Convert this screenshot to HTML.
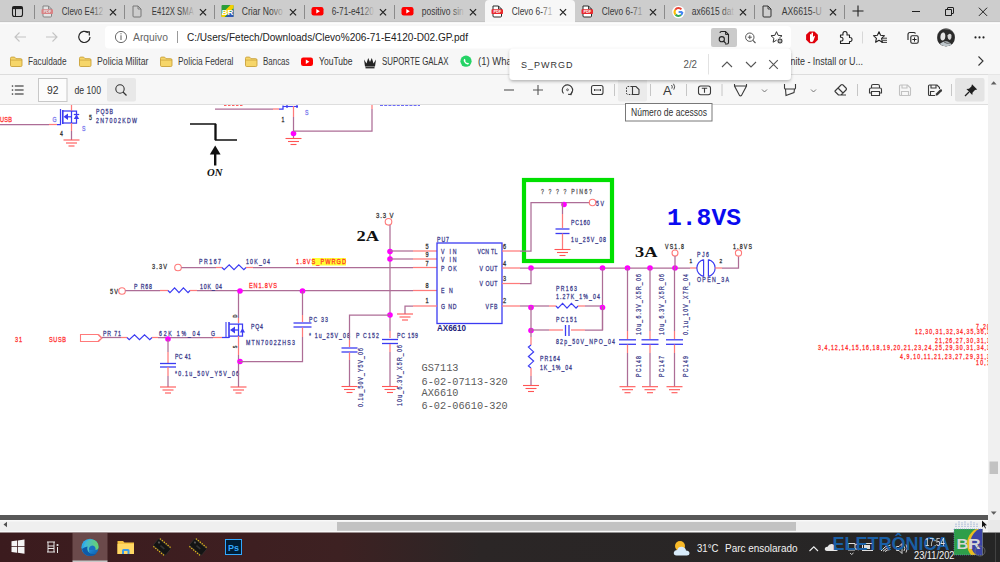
<!DOCTYPE html>
<html><head><meta charset="utf-8"><style>*{margin:0;padding:0}html,body{width:1000px;height:562px;overflow:hidden;background:#fff}svg{display:block}</style></head><body>
<svg width="1000" height="562" viewBox="0 0 1000 562">
<defs>
<linearGradient id="fade" x1="0" x2="1"><stop offset="0" stop-color="#fff"/><stop offset="0.72" stop-color="#fff"/><stop offset="1" stop-color="#fff" stop-opacity="0"/></linearGradient>
<mask id="fm" maskContentUnits="objectBoundingBox"><rect width="1" height="1" fill="url(#fade)"/></mask>
<filter id="sh" x="-10%" y="-30%" width="120%" height="160%"><feDropShadow dx="0" dy="1.5" stdDeviation="1.8" flood-color="#000" flood-opacity="0.28"/></filter>
<linearGradient id="tb" gradientUnits="userSpaceOnUse" x1="0" y1="0" x2="1000" y2="0"><stop offset="0" stop-color="#3b1b1e"/><stop offset="0.25" stop-color="#3e1f21"/><stop offset="0.34" stop-color="#3d2122"/><stop offset="0.48" stop-color="#2b2626"/><stop offset="1" stop-color="#252525"/></linearGradient>
</defs>
<rect x="0" y="0" width="1000" height="22" fill="#cdcdcd" rx="0" />
<path d="M485 22 V4 Q485 0 489 0 H571 Q575 0 575 4 V22 Z" stroke="none" stroke-width="1" fill="#f7f7f7" />
<line x1="34.5" y1="5" x2="34.5" y2="19" stroke="#8a8a8a" stroke-width="1" />
<line x1="124.5" y1="5" x2="124.5" y2="19" stroke="#8a8a8a" stroke-width="1" />
<line x1="214.5" y1="5" x2="214.5" y2="19" stroke="#8a8a8a" stroke-width="1" />
<line x1="304.5" y1="5" x2="304.5" y2="19" stroke="#8a8a8a" stroke-width="1" />
<line x1="394.5" y1="5" x2="394.5" y2="19" stroke="#8a8a8a" stroke-width="1" />
<line x1="664.5" y1="5" x2="664.5" y2="19" stroke="#8a8a8a" stroke-width="1" />
<line x1="754.5" y1="5" x2="754.5" y2="19" stroke="#8a8a8a" stroke-width="1" />
<line x1="844.5" y1="5" x2="844.5" y2="19" stroke="#8a8a8a" stroke-width="1" />
<path d="M12.5 8.5 Q12.5 6.5 14.5 6.5 H20.5 Q22.5 6.5 22.5 8.5 V14.5 Q22.5 16.5 20.5 16.5 H14.5 Q12.5 16.5 12.5 14.5 Z" stroke="#1f1f1f" stroke-width="1.1" fill="none" />
<rect x="12.5" y="6.5" width="10" height="2.6" fill="#1f1f1f" rx="0" />
<line x1="15.5" y1="8.5" x2="15.5" y2="16.5" stroke="#1f1f1f" stroke-width="1" />
<g transform="translate(41.5,5.5)" opacity="0.45">
<path d="M1.5 0.5 H7 L10 3.5 V10.5 Q10 11.5 9 11.5 H2.5 Q1.5 11.5 1.5 10.5 Z" stroke="#2a2a2a" stroke-width="1" fill="#fff" />
<path d="M7 0.5 V3.5 H10" stroke="#2a2a2a" stroke-width="0.9" fill="none" />
<rect x="0" y="3.8" width="11.5" height="4.6" fill="#e8282e" rx="0.6" />
<text x="5.8" y="7.4" font-size="3.9" font-weight="bold" fill="#fff" text-anchor="middle" font-family='"Liberation Sans",sans-serif'>PDF</text>
</g>
<clipPath id="tc0"><rect x="55" y="2" width="52" height="18"/></clipPath>
<g clip-path="url(#tc0)">
<text x="61.8" y="14.8" font-size="10" fill="#3a3a3a" font-family='"Liberation Sans",sans-serif' font-weight="normal" text-anchor="start" textLength="41.5" lengthAdjust="spacingAndGlyphs" >Clevo E412</text>
<rect x="91" y="2" width="14" height="18" fill="url(#fd0)"/>
<linearGradient id="fd0" x1="0" x2="1"><stop offset="0" stop-color="#cdcdcd" stop-opacity="0"/><stop offset="1" stop-color="#cdcdcd"/></linearGradient>
</g>
<path d="M109.9 9.1 L116.1 15.299999999999999 M116.1 9.1 L109.9 15.299999999999999" stroke="#1f1f1f" stroke-width="1.15" fill="none" />
<g transform="translate(131.5,5.5)">
<path d="M1.5 0.5 H6.5 L9.5 3.5 V10.5 Q9.5 11.5 8.5 11.5 H2.5 Q1.5 11.5 1.5 10.5 Z" stroke="#777" stroke-width="1" fill="none" />
<path d="M6.5 0.5 V3.5 H9.5" stroke="#777" stroke-width="0.9" fill="none" />
</g>
<clipPath id="tc1"><rect x="145" y="2" width="52" height="18"/></clipPath>
<g clip-path="url(#tc1)">
<text x="151.8" y="14.8" font-size="10" fill="#3a3a3a" font-family='"Liberation Sans",sans-serif' font-weight="normal" text-anchor="start" textLength="42" lengthAdjust="spacingAndGlyphs" >E412X SMA</text>
<rect x="181" y="2" width="14" height="18" fill="url(#fd1)"/>
<linearGradient id="fd1" x1="0" x2="1"><stop offset="0" stop-color="#cdcdcd" stop-opacity="0"/><stop offset="1" stop-color="#cdcdcd"/></linearGradient>
</g>
<path d="M199.9 9.1 L206.1 15.299999999999999 M206.1 9.1 L199.9 15.299999999999999" stroke="#1f1f1f" stroke-width="1.15" fill="none" />
<g transform="translate(221.5,5)">
<rect x="0" y="0" width="12" height="12" fill="#2a9d3a" rx="1" />
<path d="M0 9 L9 0 H12 V3 L3 12 H0 Z" stroke="none" stroke-width="1" fill="#f5d000" />
<path d="M12 4 V12 H4 Z" stroke="none" stroke-width="1" fill="#2f56b5" />
<text x="6" y="9.5" font-size="8" font-weight="bold" fill="#fff" text-anchor="middle" font-family='"Liberation Sans",sans-serif'>BR</text>
</g>
<clipPath id="tc2"><rect x="235" y="2" width="52" height="18"/></clipPath>
<g clip-path="url(#tc2)">
<text x="241.8" y="14.8" font-size="10" fill="#3a3a3a" font-family='"Liberation Sans",sans-serif' font-weight="normal" text-anchor="start" textLength="41" lengthAdjust="spacingAndGlyphs" >Criar Novo</text>
<rect x="271" y="2" width="14" height="18" fill="url(#fd2)"/>
<linearGradient id="fd2" x1="0" x2="1"><stop offset="0" stop-color="#cdcdcd" stop-opacity="0"/><stop offset="1" stop-color="#cdcdcd"/></linearGradient>
</g>
<path d="M289.9 9.1 L296.1 15.299999999999999 M296.1 9.1 L289.9 15.299999999999999" stroke="#1f1f1f" stroke-width="1.15" fill="none" />
<g transform="translate(311.5,5.5)">
<rect x="0" y="1.5" width="12" height="8.5" fill="#ff0000" rx="2.2" />
<path d="M4.8 3.6 L8.4 5.75 L4.8 7.9 Z" stroke="none" stroke-width="1" fill="#fff" />
</g>
<clipPath id="tc3"><rect x="325" y="2" width="52" height="18"/></clipPath>
<g clip-path="url(#tc3)">
<text x="331.8" y="14.8" font-size="10" fill="#3a3a3a" font-family='"Liberation Sans",sans-serif' font-weight="normal" text-anchor="start" textLength="42" lengthAdjust="spacingAndGlyphs" >6-71-e4120</text>
<rect x="361" y="2" width="14" height="18" fill="url(#fd3)"/>
<linearGradient id="fd3" x1="0" x2="1"><stop offset="0" stop-color="#cdcdcd" stop-opacity="0"/><stop offset="1" stop-color="#cdcdcd"/></linearGradient>
</g>
<path d="M379.9 9.1 L386.1 15.299999999999999 M386.1 9.1 L379.9 15.299999999999999" stroke="#1f1f1f" stroke-width="1.15" fill="none" />
<g transform="translate(401.5,5.5)">
<rect x="0" y="1.5" width="12" height="8.5" fill="#ff0000" rx="2.2" />
<path d="M4.8 3.6 L8.4 5.75 L4.8 7.9 Z" stroke="none" stroke-width="1" fill="#fff" />
</g>
<clipPath id="tc4"><rect x="415" y="2" width="52" height="18"/></clipPath>
<g clip-path="url(#tc4)">
<text x="421.8" y="14.8" font-size="10" fill="#3a3a3a" font-family='"Liberation Sans",sans-serif' font-weight="normal" text-anchor="start" textLength="42" lengthAdjust="spacingAndGlyphs" >positivo sin</text>
<rect x="451" y="2" width="14" height="18" fill="url(#fd4)"/>
<linearGradient id="fd4" x1="0" x2="1"><stop offset="0" stop-color="#cdcdcd" stop-opacity="0"/><stop offset="1" stop-color="#cdcdcd"/></linearGradient>
</g>
<path d="M469.9 9.1 L476.1 15.299999999999999 M476.1 9.1 L469.9 15.299999999999999" stroke="#1f1f1f" stroke-width="1.15" fill="none" />
<g transform="translate(491.5,5.5)">
<path d="M1.5 0.5 H7 L10 3.5 V10.5 Q10 11.5 9 11.5 H2.5 Q1.5 11.5 1.5 10.5 Z" stroke="#2a2a2a" stroke-width="1" fill="#fff" />
<path d="M7 0.5 V3.5 H10" stroke="#2a2a2a" stroke-width="0.9" fill="none" />
<rect x="0" y="3.8" width="11.5" height="4.6" fill="#e8282e" rx="0.6" />
<text x="5.8" y="7.4" font-size="3.9" font-weight="bold" fill="#fff" text-anchor="middle" font-family='"Liberation Sans",sans-serif'>PDF</text>
</g>
<clipPath id="tc5"><rect x="505" y="2" width="52" height="18"/></clipPath>
<g clip-path="url(#tc5)">
<text x="511.8" y="14.8" font-size="10" fill="#3a3a3a" font-family='"Liberation Sans",sans-serif' font-weight="normal" text-anchor="start" textLength="40.5" lengthAdjust="spacingAndGlyphs" >Clevo 6-71</text>
<rect x="541" y="2" width="14" height="18" fill="url(#fd5)"/>
<linearGradient id="fd5" x1="0" x2="1"><stop offset="0" stop-color="#f7f7f7" stop-opacity="0"/><stop offset="1" stop-color="#f7f7f7"/></linearGradient>
</g>
<path d="M559.9 9.1 L566.1 15.299999999999999 M566.1 9.1 L559.9 15.299999999999999" stroke="#1f1f1f" stroke-width="1.15" fill="none" />
<g transform="translate(581.5,5.5)">
<path d="M1.5 0.5 H7 L10 3.5 V10.5 Q10 11.5 9 11.5 H2.5 Q1.5 11.5 1.5 10.5 Z" stroke="#2a2a2a" stroke-width="1" fill="#fff" />
<path d="M7 0.5 V3.5 H10" stroke="#2a2a2a" stroke-width="0.9" fill="none" />
<rect x="0" y="3.8" width="11.5" height="4.6" fill="#e8282e" rx="0.6" />
<text x="5.8" y="7.4" font-size="3.9" font-weight="bold" fill="#fff" text-anchor="middle" font-family='"Liberation Sans",sans-serif'>PDF</text>
</g>
<clipPath id="tc6"><rect x="595" y="2" width="52" height="18"/></clipPath>
<g clip-path="url(#tc6)">
<text x="601.8" y="14.8" font-size="10" fill="#3a3a3a" font-family='"Liberation Sans",sans-serif' font-weight="normal" text-anchor="start" textLength="40.5" lengthAdjust="spacingAndGlyphs" >Clevo 6-71</text>
<rect x="631" y="2" width="14" height="18" fill="url(#fd6)"/>
<linearGradient id="fd6" x1="0" x2="1"><stop offset="0" stop-color="#cdcdcd" stop-opacity="0"/><stop offset="1" stop-color="#cdcdcd"/></linearGradient>
</g>
<path d="M649.9 9.1 L656.1 15.299999999999999 M656.1 9.1 L649.9 15.299999999999999" stroke="#1f1f1f" stroke-width="1.15" fill="none" />
<g transform="translate(673,6.5)">
<circle cx="5.5" cy="5.5" r="6.3" fill="#fff"/>
<path d="M9.40 5.50 A3.9 3.9 0 0 1 8.01 8.49" stroke="#4285f4" stroke-width="2" fill="none" />
<path d="M8.01 8.49 A3.9 3.9 0 0 1 2.51 8.01" stroke="#34a853" stroke-width="2" fill="none" />
<path d="M2.51 8.01 A3.9 3.9 0 0 1 2.31 3.26" stroke="#fbbc05" stroke-width="2" fill="none" />
<path d="M2.31 3.26 A3.9 3.9 0 0 1 8.40 2.89" stroke="#ea4335" stroke-width="2" fill="none" />
<line x1="5.6" y1="5.5" x2="9.4" y2="5.5" stroke="#4285f4" stroke-width="1.9" />
</g>
<clipPath id="tc7"><rect x="685" y="2" width="52" height="18"/></clipPath>
<g clip-path="url(#tc7)">
<text x="691.8" y="14.8" font-size="10" fill="#3a3a3a" font-family='"Liberation Sans",sans-serif' font-weight="normal" text-anchor="start" textLength="42" lengthAdjust="spacingAndGlyphs" >ax6615 dat</text>
<rect x="721" y="2" width="14" height="18" fill="url(#fd7)"/>
<linearGradient id="fd7" x1="0" x2="1"><stop offset="0" stop-color="#cdcdcd" stop-opacity="0"/><stop offset="1" stop-color="#cdcdcd"/></linearGradient>
</g>
<path d="M739.9 9.1 L746.1 15.299999999999999 M746.1 9.1 L739.9 15.299999999999999" stroke="#1f1f1f" stroke-width="1.15" fill="none" />
<g transform="translate(761.5,5.5)">
<path d="M1.5 0.5 H6.5 L9.5 3.5 V10.5 Q9.5 11.5 8.5 11.5 H2.5 Q1.5 11.5 1.5 10.5 Z" stroke="#333" stroke-width="1" fill="none" />
<path d="M6.5 0.5 V3.5 H9.5" stroke="#333" stroke-width="0.9" fill="none" />
</g>
<clipPath id="tc8"><rect x="775" y="2" width="52" height="18"/></clipPath>
<g clip-path="url(#tc8)">
<text x="781.8" y="14.8" font-size="10" fill="#3a3a3a" font-family='"Liberation Sans",sans-serif' font-weight="normal" text-anchor="start" textLength="40" lengthAdjust="spacingAndGlyphs" >AX6615-U</text>
<rect x="811" y="2" width="14" height="18" fill="url(#fd8)"/>
<linearGradient id="fd8" x1="0" x2="1"><stop offset="0" stop-color="#cdcdcd" stop-opacity="0"/><stop offset="1" stop-color="#cdcdcd"/></linearGradient>
</g>
<path d="M829.9 9.1 L836.1 15.299999999999999 M836.1 9.1 L829.9 15.299999999999999" stroke="#1f1f1f" stroke-width="1.15" fill="none" />
<path d="M852.5 11 H863.5 M858 5.5 V16.5" stroke="#1f1f1f" stroke-width="1.1" fill="none" />
<line x1="912" y1="11.5" x2="920" y2="11.5" stroke="#1f1f1f" stroke-width="1" />
<path d="M945.5 9.5 H951.5 V15.5 H945.5 Z M947.5 9.5 V8 Q947.5 7.5 948 7.5 H953 Q953.5 7.5 953.5 8 V13 Q953.5 13.5 953 13.5 H951.5" stroke="#1f1f1f" stroke-width="1" fill="none" />
<path d="M978.9 7.700000000000001 L987.1 15.9 M987.1 7.700000000000001 L978.9 15.9" stroke="#1f1f1f" stroke-width="1" fill="none" />
<rect x="0" y="22" width="1000" height="53" fill="#f7f7f7" rx="0" />
<rect x="0" y="21.3" width="485" height="1" fill="#c0c0c0" rx="0" />
<rect x="575" y="21.3" width="425" height="1" fill="#c0c0c0" rx="0" />
<rect x="0" y="22.3" width="1000" height="1.5" fill="#fdfdfd" rx="0" />
<rect x="105" y="26" width="686" height="22.5" fill="#ffffff" rx="4" />
<path d="M26 37 H15 M19.5 32.5 L15 37 L19.5 41.5" stroke="#c4c4c4" stroke-width="1.1" fill="none" />
<path d="M46 37 H57 M52.5 32.5 L57 37 L52.5 41.5" stroke="#c4c4c4" stroke-width="1.1" fill="none" />
<path d="M90 37 A5.6 5.6 0 1 1 88 32.6" stroke="#262626" stroke-width="1.2" fill="none" />
<path d="M85.5 31.8 H89.3 V35.6" stroke="#262626" stroke-width="1.2" fill="none" />
<circle cx="121" cy="37" r="5.6" fill="none" stroke="#6a6a6a" stroke-width="1"/>
<line x1="121" y1="35.2" x2="121" y2="40" stroke="#6a6a6a" stroke-width="1.1" />
<rect x="120.45" y="33.2" width="1.1" height="1.1" fill="#6a6a6a" rx="0" />
<text x="133" y="40.8" font-size="10.3" fill="#666" font-family='"Liberation Sans",sans-serif' font-weight="normal" text-anchor="start" textLength="35" lengthAdjust="spacingAndGlyphs" >Arquivo</text>
<line x1="177.5" y1="31" x2="177.5" y2="43" stroke="#9a9a9a" stroke-width="1" />
<text x="187" y="40.8" font-size="10" fill="#222" font-family='"Liberation Sans",sans-serif' font-weight="normal" text-anchor="start" textLength="281" lengthAdjust="spacingAndGlyphs" >C:/Users/Fetech/Downloads/Clevo%206-71-E4120-D02.GP.pdf</text>
<rect x="711" y="28" width="26" height="19" fill="#cbcbcb" rx="2" />
<path d="M720 33 Q720 31.5 721.5 31.5 H725.5 L728.5 34.5 V42.5 Q728.5 44 727 44 H725" stroke="#222" stroke-width="1.1" fill="none" />
<path d="M725.5 31.5 V34.5 H728.5" stroke="#222" stroke-width="0.9" fill="none" />
<circle cx="721.8" cy="39.2" r="2.6" fill="none" stroke="#222" stroke-width="1.1"/>
<line x1="723.6" y1="41" x2="725.8" y2="43.3" stroke="#222" stroke-width="1.2" />
<circle cx="749.8" cy="37.2" r="4.2" fill="none" stroke="#555" stroke-width="1"/>
<path d="M747.8 37.2 H751.8 M749.8 35.2 V39.2" stroke="#555" stroke-width="1" fill="none" />
<line x1="752.9" y1="40.3" x2="755.5" y2="43" stroke="#555" stroke-width="1.1" />
<path d="M776.50 31.70 L778.09 35.32 L782.02 35.71 L779.07 38.33 L779.91 42.19 L776.50 40.20 L773.09 42.19 L773.93 38.33 L770.98 35.71 L774.91 35.32 Z" stroke="#333" stroke-width="1" fill="none" stroke-linejoin="round"/>
<circle cx="780" cy="41" r="3" fill="#444" stroke="#fff" stroke-width="0.8"/>
<path d="M778.6 41 H781.4 M780 39.6 V42.4" stroke="#fff" stroke-width="0.8" fill="none" />
<path d="M817.91 39.75 L814.45 43.21 L809.55 43.21 L806.09 39.75 L806.09 34.85 L809.55 31.39 L814.45 31.39 L817.91 34.85 Z" stroke="none" stroke-width="1" fill="#e0000b" />
<path d="M810 41.5 V35 Q810 34 810.8 34 Q811.5 34 811.5 35 V33.3 Q811.5 32.6 812.2 32.6 Q813 32.6 813 33.3 V37 L814 36 Q814.8 35.5 815 36.2 L813.5 40.5 Q812.8 42 811.5 42 Z" stroke="none" stroke-width="1" fill="#fff" />
<path d="M840.5 35 H843 Q842.5 31.5 845 31.5 Q847.5 31.5 847 35 H849.5 V37.5 Q852 37.3 852 39.5 Q852 41.8 849.5 41.5 V43.5 H840.5 V41 Q843 41.3 843 39.2 Q843 37 840.5 37.3 Z" stroke="#222" stroke-width="1.1" fill="none" stroke-linejoin="round"/>
<line x1="862.5" y1="31.5" x2="862.5" y2="43.5" stroke="#d8d8d8" stroke-width="1" />
<path d="M879.00 31.70 L880.59 35.32 L884.52 35.71 L881.57 38.33 L882.41 42.19 L879.00 40.20 L875.59 42.19 L876.43 38.33 L873.48 35.71 L877.41 35.32 Z" stroke="#222" stroke-width="1.1" fill="none" stroke-linejoin="round"/>
<path d="M882 38.2 H887 M882.5 40.3 H887 M881.5 42.4 H887" stroke="#222" stroke-width="0.9" fill="none" />
<path d="M908 40 V34.5 Q908 32.5 910 32.5 H913.5 Q915 32.5 915.5 33.5" stroke="#222" stroke-width="1.1" fill="none" />
<rect x="910.8" y="35.8" width="7.4" height="7.4" rx="1.4" fill="#f7f7f7" stroke="#222" stroke-width="1.1"/>
<path d="M914.5 37.4 V41.6 M912.4 39.5 H916.6" stroke="#222" stroke-width="1" fill="none" />
<clipPath id="av"><circle cx="946" cy="37.3" r="9"/></clipPath>
<g clip-path="url(#av)">
<rect x="937" y="28" width="18" height="19" fill="#8d8d8d" rx="0" />
<path d="M937 28 H955 V47 H937 Z" stroke="none" stroke-width="1" fill="#7a7a7a" />
<path d="M938 34 Q941 28.5 946 29.5 Q952 29 954.5 35 Q955.5 41 952 47 H940 Q936 41 938 34 Z" stroke="none" stroke-width="1" fill="#2b2b2b" />
<path d="M940.5 36 Q941 32 944 32.5 Q946 34 945 38.5 Q944 41 942 40.5 Q940 39.5 940.5 36 Z" stroke="none" stroke-width="1" fill="#e4e4e4" />
<path d="M947.5 35.5 Q949.5 32.5 951.5 35 Q952 38.5 950 40 Q947.5 39.5 947.5 35.5 Z" stroke="none" stroke-width="1" fill="#d6d6d6" />
<path d="M939 45 Q943 40.5 947.5 41.5 Q951 42.5 953 47 H939 Z" stroke="none" stroke-width="1" fill="#bfc7cc" />
<path d="M944 42 Q947 44 950 43" stroke="#444" stroke-width="0.8" fill="none" />
</g>
<circle cx="975.5" cy="37.4" r="1.05" fill="#1f1f1f"/>
<circle cx="979.5" cy="37.4" r="1.05" fill="#1f1f1f"/>
<circle cx="983.5" cy="37.4" r="1.05" fill="#1f1f1f"/>
<g transform="translate(10,56.5)">
<path d="M0.5 1.8 Q0.5 0.6 1.7 0.6 H4.6 L6 2.2 H10.8 Q12 2.2 12 3.4 V8.9 Q12 10 10.8 10 H1.7 Q0.5 10 0.5 8.9 Z" stroke="#c9a13a" stroke-width="0.9" fill="#f6d66a" />
<path d="M0.5 3.6 H12" stroke="#c9a13a" stroke-width="0.7" fill="none" />
</g>
<text x="28" y="65.3" font-size="10" fill="#3a3a3a" font-family='"Liberation Sans",sans-serif' font-weight="normal" text-anchor="start" textLength="38.5" lengthAdjust="spacingAndGlyphs" >Faculdade</text>
<g transform="translate(79,56.5)">
<path d="M0.5 1.8 Q0.5 0.6 1.7 0.6 H4.6 L6 2.2 H10.8 Q12 2.2 12 3.4 V8.9 Q12 10 10.8 10 H1.7 Q0.5 10 0.5 8.9 Z" stroke="#c9a13a" stroke-width="0.9" fill="#f6d66a" />
<path d="M0.5 3.6 H12" stroke="#c9a13a" stroke-width="0.7" fill="none" />
</g>
<text x="97" y="65.3" font-size="10" fill="#3a3a3a" font-family='"Liberation Sans",sans-serif' font-weight="normal" text-anchor="start" textLength="51.5" lengthAdjust="spacingAndGlyphs" >Policia Militar</text>
<g transform="translate(160,56.5)">
<path d="M0.5 1.8 Q0.5 0.6 1.7 0.6 H4.6 L6 2.2 H10.8 Q12 2.2 12 3.4 V8.9 Q12 10 10.8 10 H1.7 Q0.5 10 0.5 8.9 Z" stroke="#c9a13a" stroke-width="0.9" fill="#f6d66a" />
<path d="M0.5 3.6 H12" stroke="#c9a13a" stroke-width="0.7" fill="none" />
</g>
<text x="178" y="65.3" font-size="10" fill="#3a3a3a" font-family='"Liberation Sans",sans-serif' font-weight="normal" text-anchor="start" textLength="55.5" lengthAdjust="spacingAndGlyphs" >Policia Federal</text>
<g transform="translate(245,56.5)">
<path d="M0.5 1.8 Q0.5 0.6 1.7 0.6 H4.6 L6 2.2 H10.8 Q12 2.2 12 3.4 V8.9 Q12 10 10.8 10 H1.7 Q0.5 10 0.5 8.9 Z" stroke="#c9a13a" stroke-width="0.9" fill="#f6d66a" />
<path d="M0.5 3.6 H12" stroke="#c9a13a" stroke-width="0.7" fill="none" />
</g>
<text x="263" y="65.3" font-size="10" fill="#3a3a3a" font-family='"Liberation Sans",sans-serif' font-weight="normal" text-anchor="start" textLength="26.5" lengthAdjust="spacingAndGlyphs" >Bancas</text>
<g transform="translate(301,56)">
<rect x="0" y="1.5" width="12" height="8.5" fill="#ff0000" rx="2.2" />
<path d="M4.8 3.6 L8.4 5.75 L4.8 7.9 Z" stroke="none" stroke-width="1" fill="#fff" />
</g>
<text x="319" y="65.3" font-size="10" fill="#333" font-family='"Liberation Sans",sans-serif' font-weight="normal" text-anchor="start" textLength="33.5" lengthAdjust="spacingAndGlyphs" >YouTube</text>
<path d="M364 59.5 L366.5 63.5 L368.2 58 L370 62 L371.8 58 L373.5 63.5 L376 59.5 L375 66.5 H365 Z" stroke="none" stroke-width="1" fill="#222" />
<rect x="365.5" y="66.8" width="9" height="1.6" fill="#333" rx="0" />
<text x="382" y="65.3" font-size="10" fill="#333" font-family='"Liberation Sans",sans-serif' font-weight="normal" text-anchor="start" textLength="66.5" lengthAdjust="spacingAndGlyphs" >SUPORTE GALAX</text>
<circle cx="466" cy="61.2" r="5.6" fill="#25d366"/>
<path d="M461.8 65.8 L462.8 62.8 L464.8 64.6 Z" stroke="none" stroke-width="1" fill="#25d366" />
<path d="M464 59.2 Q464.5 58.5 465 59.2 L465.5 60.3 Q465 61 465.6 61.8 Q466.3 62.6 467.1 63 Q467.8 62.4 468.4 63 L469 63.5 Q468.6 64.8 467.3 64.5 Q465 63.8 463.9 61.4 Q463.4 60 464 59.2 Z" stroke="none" stroke-width="1" fill="#fff" />
<text x="478" y="65.3" font-size="10" fill="#333" font-family='"Liberation Sans",sans-serif' font-weight="normal" text-anchor="start" textLength="58" lengthAdjust="spacingAndGlyphs" >(1) WhatsApp</text>
<text x="790.5" y="65.3" font-size="10" fill="#333" font-family='"Liberation Sans",sans-serif' font-weight="normal" text-anchor="start" textLength="72.5" lengthAdjust="spacingAndGlyphs" >nite - Install or U...</text>
<path d="M978.5 56.5 L983 61 L978.5 65.5" stroke="#333" stroke-width="1.1" fill="none" />
<rect x="0" y="74" width="1000" height="1" fill="#dddddd" rx="0" />
<rect x="0" y="75" width="988" height="29" fill="#f7f7f7" rx="0" />
<rect x="0" y="104" width="988" height="1" fill="#dedede" rx="0" />
<rect x="11.8" y="85.4" width="1.4" height="1.3" fill="#333" rx="0" />
<rect x="14.8" y="85.45" width="8.8" height="1.1" fill="#333" rx="0" />
<rect x="11.8" y="89.4" width="1.4" height="1.3" fill="#333" rx="0" />
<rect x="14.8" y="89.45" width="8.8" height="1.1" fill="#333" rx="0" />
<rect x="11.8" y="93.4" width="1.4" height="1.3" fill="#333" rx="0" />
<rect x="14.8" y="93.45" width="8.8" height="1.1" fill="#333" rx="0" />
<rect x="38.5" y="78.5" width="28.5" height="23" fill="#fcfcfc" rx="0" stroke="#c8c8c8" stroke-width="1" rx="2"/>
<text x="52.8" y="94.2" font-size="10" fill="#333" font-family='"Liberation Sans",sans-serif' font-weight="normal" text-anchor="middle" textLength="11.5" lengthAdjust="spacingAndGlyphs" >92</text>
<text x="74.5" y="94.2" font-size="10" fill="#333" font-family='"Liberation Sans",sans-serif' font-weight="normal" text-anchor="start" textLength="26.5" lengthAdjust="spacingAndGlyphs" >de 100</text>
<rect x="107" y="78" width="29" height="23.5" fill="#e8e8e8" rx="2" />
<circle cx="120" cy="89" r="4.2" fill="none" stroke="#333" stroke-width="1.1"/>
<line x1="123" y1="92" x2="126.5" y2="95.5" stroke="#333" stroke-width="1.2" />
<line x1="504" y1="90" x2="514" y2="90" stroke="#555" stroke-width="1.1" />
<path d="M533 90 H543 M538 85 V95" stroke="#555" stroke-width="1.1" fill="none" />
<path d="M563.5 93.5 A5.2 5.2 0 1 1 570.6 94.2" stroke="#3a3a3a" stroke-width="1.1" fill="none" />
<path d="M571.8 91.6 L571 94.6 L568 94.3" stroke="#3a3a3a" stroke-width="1.1" fill="none" />
<circle cx="567.5" cy="89.8" r="0.9" fill="none" stroke="#3a3a3a" stroke-width="0.8"/>
<rect x="591.5" y="85.5" width="11.5" height="9" fill="none" rx="2" stroke="#3a3a3a" stroke-width="1.1"/>
<path d="M594 90 H601 M595 89 L594 90 L595 91 M600 89 L601 90 L600 91" stroke="#3a3a3a" stroke-width="0.9" fill="none" />
<line x1="614.5" y1="84" x2="614.5" y2="96" stroke="#c6c6c6" stroke-width="1" />
<line x1="650.5" y1="84" x2="650.5" y2="96" stroke="#c6c6c6" stroke-width="1" />
<line x1="686.5" y1="84" x2="686.5" y2="96" stroke="#c6c6c6" stroke-width="1" />
<line x1="722" y1="84" x2="722" y2="96" stroke="#c6c6c6" stroke-width="1" />
<line x1="857.5" y1="84" x2="857.5" y2="96" stroke="#c6c6c6" stroke-width="1" />
<line x1="951.5" y1="84" x2="951.5" y2="96" stroke="#c6c6c6" stroke-width="1" />
<rect x="618" y="76.5" width="29" height="25" fill="#ebebeb" rx="2" />
<path d="M632 86.5 H628 Q626.5 86.5 626.5 88 V93 Q626.5 94.5 628 94.5 H632" stroke="#3a3a3a" stroke-width="1" fill="none" stroke-dasharray="1.6 1.2"/>
<path d="M632.5 86.5 H636 L639 89.5 V93.5 Q639 94.5 638 94.5 H632.5 Z" stroke="#3a3a3a" stroke-width="1.1" fill="none" />
<text x="663" y="95" font-size="13" fill="#3a3a3a" font-family='"Liberation Sans",sans-serif' font-weight="normal" text-anchor="start" >A</text>
<path d="M671.5 85 Q673 86.8 671.8 88.6 M673.5 83.8 Q675.7 86.8 673.8 89.6" stroke="#3a3a3a" stroke-width="0.9" fill="none" />
<rect x="698.5" y="86" width="12" height="8.8" fill="none" rx="2.2" stroke="#3a3a3a" stroke-width="1.1"/>
<path d="M701.8 88.3 H707.2 M704.5 88.3 V92.8" stroke="#3a3a3a" stroke-width="1.1" fill="none" />
<path d="M734.5 84 V86 L739.5 95.5 Q740.5 96.2 741.5 95.5 L746.5 86 V84 M735 86 H746" stroke="#3a3a3a" stroke-width="1.1" fill="none" />
<path d="M762 89.5 L764.5 92 L767 89.5" stroke="#666" stroke-width="0.9" fill="none" />
<path d="M784.5 84 V88 Q784.5 89 785.5 89 H794.5 Q795.5 89 795.5 88 V84 M785.5 89 L786 95.5 L794 92.5 L794.5 89" stroke="#3a3a3a" stroke-width="1.1" fill="none" />
<path d="M811 89.5 L813.5 92 L816 89.5" stroke="#666" stroke-width="0.9" fill="none" />
<path d="M835 91 L841 85 Q842 84 843 85 L846 88 Q847 89 846 90 L841 95 H838.5 L835 91.5 Z M838 88 L843 93 M839 95 H846" stroke="#3a3a3a" stroke-width="1.1" fill="none" stroke-linejoin="round"/>
<path d="M871.5 88 V86 Q871.5 84.5 873 84.5 H878 Q879.5 84.5 879.5 86 V88 M871 93 H869.5 V89.5 Q869.5 88 871 88 H880 Q881.5 88 881.5 89.5 V93 H880 M871.5 91.5 H879.5 V95.5 H871.5 Z" stroke="#3a3a3a" stroke-width="1.1" fill="none" />
<path d="M899.5 86 Q899.5 85 900.5 85 H907.5 L910.5 88 V94.5 Q910.5 95.5 909.5 95.5 H900.5 Q899.5 95.5 899.5 94.5 Z M902 85 V88 H907 V85 M901.5 95.5 V91.5 H908.5 V95.5" stroke="#c2c2c2" stroke-width="1.1" fill="none" />
<path d="M935 95.5 H929.5 Q928.5 95.5 928.5 94.5 V86 Q928.5 85 929.5 85 H937 L939.5 87.5 V89 M931 85 V88 H936 V85 M930.5 95.5 V91.5 H934.5" stroke="#3a3a3a" stroke-width="1.1" fill="none" />
<path d="M935.5 95.8 L936 93.6 L940 89.6 Q941 88.8 941.8 89.6 Q942.5 90.4 941.7 91.3 L937.7 95.3 Z" stroke="none" stroke-width="1" fill="#3a3a3a" />
<rect x="955" y="78" width="29.5" height="23.5" fill="#e4e4e4" rx="2" />
<path d="M972 84.2 L977.2 89.4 L975 90 L972.6 92.5 L972.3 95 L966.4 89.1 L969 88.8 L971.4 86.4 Z" stroke="none" stroke-width="1" fill="#1f1f1f" stroke="#1f1f1f" stroke-width="0.8" stroke-linejoin="round"/>
<line x1="969" y1="92" x2="965" y2="96" stroke="#1f1f1f" stroke-width="1.2" />
<rect x="0" y="105" width="988" height="410" fill="#ffffff" rx="0" />
<defs><clipPath id="pc"><rect x="0" y="105" width="988" height="410"/></clipPath></defs><g clip-path="url(#pc)">
<text x="0" y="0" transform="translate(0 122) scale(1 1.25)" font-size="5.60" fill="#ff2e2e" font-family='"Liberation Sans",sans-serif' font-weight="normal" font-style="normal" text-anchor="start" textLength="12" lengthAdjust="spacing" stroke="#ff2e2e" stroke-width="0.22">USB</text>
<path d="M0 124.5 L49 124.5" stroke="#ad6d96" stroke-width="1.25" fill="none"/>
<path d="M49 124.5 L57 124.5" stroke="#ff7a7a" stroke-width="1.25" fill="none"/>
<path d="M57 124.5 L60.5 124.5 L60.5 109" stroke="#3b3bf2" stroke-width="1.25" fill="none"/>
<path d="M62.8 110 L62.8 124" stroke="#3b3bf2" stroke-width="1.6" fill="none"/>
<path d="M62.8 111 L71.5 111" stroke="#3b3bf2" stroke-width="1.25" fill="none"/>
<path d="M71.5 105 L71.5 111" stroke="#ff7a7a" stroke-width="1.25" fill="none"/>
<path d="M62.8 123 L71.5 123" stroke="#3b3bf2" stroke-width="1.25" fill="none"/>
<path d="M71.5 111 L71.5 123" stroke="#3b3bf2" stroke-width="1.25" fill="none"/>
<path d="M63.5 116.8 L68 113.5 V120 Z" fill="#3b3bf2"/>
<path d="M68 116.8 L71.5 116.8" stroke="#3b3bf2" stroke-width="1.25" fill="none"/>
<path d="M71.5 111 L76.5 111 L76.5 123 L71.5 123" stroke="#3b3bf2" stroke-width="1.25" fill="none"/>
<path d="M73.8 119 H79.2 L76.5 114.5 Z" fill="#3b3bf2"/>
<path d="M73.8 114.5 L79.2 114.5" stroke="#3b3bf2" stroke-width="1.25" fill="none"/>
<path d="M71.5 123 L71.5 131" stroke="#ff7a7a" stroke-width="1.25" fill="none"/>
<path d="M71.5 131 L71.5 140" stroke="#ad6d96" stroke-width="1.25" fill="none"/>
<path d="M63.5 140 L79.5 140" stroke="#ff5555" stroke-width="1.1" fill="none"/>
<path d="M66.0 143 L77.0 143" stroke="#ff5555" stroke-width="1.1" fill="none"/>
<path d="M68.5 146 L74.5 146" stroke="#ff5555" stroke-width="1.1" fill="none"/>
<text x="0" y="0" transform="translate(52.5 122) scale(1 1.25)" font-size="5.20" fill="#7777ee" font-family='"Liberation Sans",sans-serif' font-weight="normal" font-style="normal" text-anchor="start" textLength="5" lengthAdjust="spacing" stroke="#7777ee" stroke-width="0.22">G</text>
<text x="0" y="0" transform="translate(82 131) scale(1 1.25)" font-size="5.20" fill="#7777ee" font-family='"Liberation Sans",sans-serif' font-weight="normal" font-style="normal" text-anchor="start" textLength="4.5" lengthAdjust="spacing" stroke="#7777ee" stroke-width="0.22">S</text>
<text x="0" y="0" transform="translate(60 135.5) scale(1 1.25)" font-size="5.20" fill="#333" font-family='"Liberation Sans",sans-serif' font-weight="normal" font-style="normal" text-anchor="start" textLength="3.5" lengthAdjust="spacing" stroke="#333" stroke-width="0.22">4</text>
<text x="0" y="0" transform="translate(89 119.5) scale(1 1.25)" font-size="5.20" fill="#333" font-family='"Liberation Sans",sans-serif' font-weight="normal" font-style="normal" text-anchor="start" textLength="4" lengthAdjust="spacing" stroke="#333" stroke-width="0.22">5</text>
<text x="0" y="0" transform="translate(96 114) scale(1 1.25)" font-size="5.20" fill="#3c3c8c" font-family='"Liberation Sans",sans-serif' font-weight="normal" font-style="normal" text-anchor="start" textLength="17" lengthAdjust="spacing" stroke="#3c3c8c" stroke-width="0.22">PQ5B</text>
<text x="0" y="0" transform="translate(96 122.5) scale(1 1.25)" font-size="5.20" fill="#3c3c8c" font-family='"Liberation Sans",sans-serif' font-weight="normal" font-style="normal" text-anchor="start" textLength="41" lengthAdjust="spacing" stroke="#3c3c8c" stroke-width="0.22">2N7002KDW</text>
<path d="M224 105 H243" stroke="#ff2e2e" stroke-width="1.5" stroke-dasharray="2.5 1.5"/>
<path d="M215 109 L273 109" stroke="#ad6d96" stroke-width="1.25" fill="none"/>
<path d="M273 109 L279 109" stroke="#ff7a7a" stroke-width="1.25" fill="none"/>
<path d="M279 109 L283 109 L283 105.5" stroke="#3b3bf2" stroke-width="1.25" fill="none"/>
<path d="M283 106.5 L298 106.5" stroke="#3b3bf2" stroke-width="1.1" fill="none"/>
<path d="M287 105 L287 108" stroke="#3b3bf2" stroke-width="1.3" fill="none"/>
<path d="M297 105 L297 108" stroke="#3b3bf2" stroke-width="1.3" fill="none"/>
<path d="M293.5 106 L293.5 117" stroke="#ff7a7a" stroke-width="1.25" fill="none"/>
<path d="M293.5 117 L293.5 138" stroke="#ad6d96" stroke-width="1.25" fill="none"/>
<circle cx="293.5" cy="133.5" r="2.8" fill="#ff00ff"/>
<path d="M293.5 131 L372 131 L372 109" stroke="#ad6d96" stroke-width="1.25" fill="none"/>
<path d="M372 105 L372 109" stroke="#ff7a7a" stroke-width="1.25" fill="none"/>
<path d="M285.5 138.5 L301.5 138.5" stroke="#ff5555" stroke-width="1.1" fill="none"/>
<path d="M288.0 141.5 L299.0 141.5" stroke="#ff5555" stroke-width="1.1" fill="none"/>
<path d="M290.5 144.5 L296.5 144.5" stroke="#ff5555" stroke-width="1.1" fill="none"/>
<text x="0" y="0" transform="translate(305 114.5) scale(1 1.25)" font-size="5.20" fill="#7777ee" font-family='"Liberation Sans",sans-serif' font-weight="normal" font-style="normal" text-anchor="start" textLength="4.5" lengthAdjust="spacing" stroke="#7777ee" stroke-width="0.22">S</text>
<text x="0" y="0" transform="translate(281.5 122) scale(1 1.25)" font-size="5.20" fill="#333" font-family='"Liberation Sans",sans-serif' font-weight="normal" font-style="normal" text-anchor="start" textLength="3" lengthAdjust="spacing" stroke="#333" stroke-width="0.22">1</text>
<path d="M380 105 H420" stroke="#3b3bf2" stroke-width="1.3" stroke-dasharray="3 1.2"/>
<path d="M190 124 H215.5 V140 H237" stroke="#111" stroke-width="1.3" fill="none"/>
<path d="M215.5 124 L215.5 140" stroke="#111" stroke-width="2.2" fill="none"/>
<path d="M215.2 152 L215.2 165.5" stroke="#111" stroke-width="2.4" fill="none"/>
<path d="M209.8 154.5 L215.2 145.5 L220.6 154.5 Z" fill="#111"/>
<text x="0" y="0" transform="translate(207 175.5)" font-size="9.50" fill="#111" font-family='"Liberation Serif",serif' font-weight="bold" font-style="italic" text-anchor="start" textLength="15.5" lengthAdjust="spacingAndGlyphs">ON</text>
<text x="0" y="0" transform="translate(152 268.5) scale(1 1.25)" font-size="5.60" fill="#333" font-family='"Liberation Sans",sans-serif' font-weight="normal" font-style="normal" text-anchor="start" textLength="15" lengthAdjust="spacing" stroke="#333" stroke-width="0.22">3.3V</text>
<circle cx="178" cy="267.5" r="3.3" fill="none" stroke="#ff7a7a" stroke-width="1.1"/>
<path d="M181.3 267.5 L216 267.5" stroke="#ad6d96" stroke-width="1.25" fill="none"/>
<path d="M216 267.5 L222 267.5" stroke="#ff7a7a" stroke-width="1.25" fill="none"/>
<path d="M222 267.5 L224.16 269.7 L229.2 264.9 L234.0 269.7 L238.8 264.9 L243.84 269.7 L246.0 267.5" stroke="#3b3bf2" stroke-width="1.2" fill="none"/>
<path d="M246 267.5 L253 267.5" stroke="#ff7a7a" stroke-width="1.25" fill="none"/>
<path d="M253 267.5 L413 267.5" stroke="#ad6d96" stroke-width="1.25" fill="none"/>
<path d="M413 267.5 L437 267.5" stroke="#ff7a7a" stroke-width="1.25" fill="none"/>
<text x="0" y="0" transform="translate(199 264) scale(1 1.25)" font-size="5.20" fill="#3c3c8c" font-family='"Liberation Sans",sans-serif' font-weight="normal" font-style="normal" text-anchor="start" textLength="22" lengthAdjust="spacing" stroke="#3c3c8c" stroke-width="0.22">PR167</text>
<text x="0" y="0" transform="translate(246 264) scale(1 1.25)" font-size="5.20" fill="#3c3c8c" font-family='"Liberation Sans",sans-serif' font-weight="normal" font-style="normal" text-anchor="start" textLength="24" lengthAdjust="spacing" stroke="#3c3c8c" stroke-width="0.22">10K_04</text>
<rect x="312" y="258" width="34" height="7.5" fill="#ffff33"/>
<text x="0" y="0" transform="translate(296 264.3) scale(1 1.25)" font-size="5.60" fill="#ff2e2e" font-family='"Liberation Sans",sans-serif' font-weight="normal" font-style="normal" text-anchor="start" textLength="50" lengthAdjust="spacing" stroke="#ff2e2e" stroke-width="0.22">1.8VS_PWRGD</text>
<text x="0" y="0" transform="translate(110 293.5) scale(1 1.25)" font-size="5.60" fill="#333" font-family='"Liberation Sans",sans-serif' font-weight="normal" font-style="normal" text-anchor="start" textLength="8" lengthAdjust="spacing" stroke="#333" stroke-width="0.22">5V</text>
<circle cx="122" cy="291" r="3.3" fill="none" stroke="#ff7a7a" stroke-width="1.1"/>
<path d="M125.3 290.5 L160 290.5" stroke="#ad6d96" stroke-width="1.25" fill="none"/>
<path d="M160 290.5 L168 290.5" stroke="#ff7a7a" stroke-width="1.25" fill="none"/>
<path d="M168 290.5 L169.98 292.7 L174.6 287.9 L179.0 292.7 L183.4 287.9 L188.02 292.7 L190.0 290.5" stroke="#3b3bf2" stroke-width="1.2" fill="none"/>
<path d="M190 290.5 L197 290.5" stroke="#ff7a7a" stroke-width="1.25" fill="none"/>
<path d="M197 290.5 L413 290.5" stroke="#ad6d96" stroke-width="1.25" fill="none"/>
<path d="M413 290.5 L437 290.5" stroke="#ff7a7a" stroke-width="1.25" fill="none"/>
<text x="0" y="0" transform="translate(134 289) scale(1 1.25)" font-size="5.20" fill="#3c3c8c" font-family='"Liberation Sans",sans-serif' font-weight="normal" font-style="normal" text-anchor="start" textLength="18" lengthAdjust="spacing" stroke="#3c3c8c" stroke-width="0.22">P R68</text>
<text x="0" y="0" transform="translate(200 289) scale(1 1.25)" font-size="5.20" fill="#3c3c8c" font-family='"Liberation Sans",sans-serif' font-weight="normal" font-style="normal" text-anchor="start" textLength="22" lengthAdjust="spacing" stroke="#3c3c8c" stroke-width="0.22">10K_04</text>
<text x="0" y="0" transform="translate(249 288) scale(1 1.25)" font-size="5.60" fill="#ff2e2e" font-family='"Liberation Sans",sans-serif' font-weight="normal" font-style="normal" text-anchor="start" textLength="28" lengthAdjust="spacing" stroke="#ff2e2e" stroke-width="0.22">EN1.8VS</text>
<text x="0" y="0" transform="translate(15 341.5) scale(1 1.25)" font-size="5.60" fill="#ff2e2e" font-family='"Liberation Sans",sans-serif' font-weight="normal" font-style="normal" text-anchor="start" textLength="7" lengthAdjust="spacing" stroke="#ff2e2e" stroke-width="0.22">31</text>
<text x="0" y="0" transform="translate(49 341.5) scale(1 1.25)" font-size="5.60" fill="#ff2e2e" font-family='"Liberation Sans",sans-serif' font-weight="normal" font-style="normal" text-anchor="start" textLength="17" lengthAdjust="spacing" stroke="#ff2e2e" stroke-width="0.22">SUSB</text>
<path d="M80.5 334.5 H98 L101.5 338 L98 341.5 H80.5 Z M98.5 334.5 L102 338 L98.5 341.5" stroke="#ff7a7a" stroke-width="1.1" fill="none"/>
<text x="0" y="0" transform="translate(103 336) scale(1 1.25)" font-size="5.20" fill="#3c3c8c" font-family='"Liberation Sans",sans-serif' font-weight="normal" font-style="normal" text-anchor="start" textLength="18" lengthAdjust="spacing" stroke="#3c3c8c" stroke-width="0.22">PR 71</text>
<path d="M102 337.5 L121 337.5" stroke="#ad6d96" stroke-width="1.25" fill="none"/>
<path d="M121 337.5 L127 337.5" stroke="#ff7a7a" stroke-width="1.25" fill="none"/>
<path d="M127 337.5 L129.25 339.7 L134.5 334.9 L139.5 339.7 L144.5 334.9 L149.75 339.7 L152.0 337.5" stroke="#3b3bf2" stroke-width="1.2" fill="none"/>
<path d="M152 337.5 L158 337.5" stroke="#ff7a7a" stroke-width="1.25" fill="none"/>
<path d="M158 337.5 L213 337.5" stroke="#ad6d96" stroke-width="1.25" fill="none"/>
<path d="M213 337.5 L222 337.5" stroke="#ff7a7a" stroke-width="1.25" fill="none"/>
<path d="M222 337.5 L229 337.5" stroke="#3b3bf2" stroke-width="1.25" fill="none"/>
<text x="0" y="0" transform="translate(159 336) scale(1 1.25)" font-size="5.20" fill="#3c3c8c" font-family='"Liberation Sans",sans-serif' font-weight="normal" font-style="normal" text-anchor="start" textLength="41" lengthAdjust="spacing" stroke="#3c3c8c" stroke-width="0.22">62K 1%_04</text>
<text x="0" y="0" transform="translate(211 336) scale(1 1.25)" font-size="5.20" fill="#3c3c8c" font-family='"Liberation Sans",sans-serif' font-weight="normal" font-style="normal" text-anchor="start" textLength="4.5" lengthAdjust="spacing" stroke="#3c3c8c" stroke-width="0.22">G</text>
<circle cx="168" cy="339" r="2.8" fill="#ff00ff"/>
<path d="M168 339 L168 352" stroke="#ad6d96" stroke-width="1.25" fill="none"/>
<path d="M168 352 L168 363" stroke="#ff7a7a" stroke-width="1.25" fill="none"/>
<path d="M160 363.5 L176 363.5" stroke="#3b3bf2" stroke-width="1.3" fill="none"/>
<path d="M160 367.0 L176 367.0" stroke="#3b3bf2" stroke-width="1.3" fill="none"/>
<path d="M168 367 L168 376" stroke="#ff7a7a" stroke-width="1.25" fill="none"/>
<path d="M168 376 L168 387" stroke="#ad6d96" stroke-width="1.25" fill="none"/>
<path d="M160 387 L176 387" stroke="#ff5555" stroke-width="1.1" fill="none"/>
<path d="M162.5 390 L173.5 390" stroke="#ff5555" stroke-width="1.1" fill="none"/>
<path d="M165 393 L171 393" stroke="#ff5555" stroke-width="1.1" fill="none"/>
<text x="0" y="0" transform="translate(175 359) scale(1 1.25)" font-size="5.20" fill="#3c3c8c" font-family='"Liberation Sans",sans-serif' font-weight="normal" font-style="normal" text-anchor="start" textLength="16" lengthAdjust="spacing" stroke="#3c3c8c" stroke-width="0.22">PC 41</text>
<text x="0" y="0" transform="translate(175 375.5) scale(1 1.25)" font-size="5.20" fill="#3c3c8c" font-family='"Liberation Sans",sans-serif' font-weight="normal" font-style="normal" text-anchor="start" textLength="64" lengthAdjust="spacing" stroke="#3c3c8c" stroke-width="0.22">*0.1u_50V_Y5V_06</text>
<path d="M238.5 291 L238.5 318" stroke="#ad6d96" stroke-width="1.25" fill="none"/>
<path d="M238.5 318 L238.5 323" stroke="#ff7a7a" stroke-width="1.25" fill="none"/>
<path d="M229 322 L229 338" stroke="#3b3bf2" stroke-width="1.6" fill="none"/>
<path d="M229 324 L238.5 324 L238.5 336 L229 336" stroke="#3b3bf2" stroke-width="1.25" fill="none"/>
<path d="M226 322 L226 338" stroke="#3b3bf2" stroke-width="1.1" fill="none"/>
<path d="M230 330 L235 326.5 V333.5 Z" fill="#3b3bf2"/>
<path d="M235 330 L238.5 330" stroke="#3b3bf2" stroke-width="1.25" fill="none"/>
<path d="M238.5 324 L242.5 324 L242.5 336 L238.5 336" stroke="#3b3bf2" stroke-width="1.25" fill="none"/>
<path d="M240 332.5 H245 L242.5 328 Z" fill="#3b3bf2"/>
<path d="M238.5 336 L238.5 355" stroke="#ff7a7a" stroke-width="1.25" fill="none"/>
<path d="M238.5 355 L238.5 387" stroke="#ad6d96" stroke-width="1.25" fill="none"/>
<path d="M230.5 387 L246.5 387" stroke="#ff5555" stroke-width="1.1" fill="none"/>
<path d="M233.0 390 L244.0 390" stroke="#ff5555" stroke-width="1.1" fill="none"/>
<path d="M235.5 393 L241.5 393" stroke="#ff5555" stroke-width="1.1" fill="none"/>
<text x="0" y="0" transform="translate(236.5 316) rotate(-90) scale(1 1.25)" font-size="4.00" fill="#333" font-family='"Liberation Sans",sans-serif' font-weight="normal" font-style="normal" text-anchor="middle" textLength="4" lengthAdjust="spacing" stroke="#333" stroke-width="0.22">D</text>
<text x="0" y="0" transform="translate(236.5 347) rotate(-90) scale(1 1.25)" font-size="4.00" fill="#333" font-family='"Liberation Sans",sans-serif' font-weight="normal" font-style="normal" text-anchor="middle" textLength="4" lengthAdjust="spacing" stroke="#333" stroke-width="0.22">S</text>
<text x="0" y="0" transform="translate(251 328.5) scale(1 1.25)" font-size="5.20" fill="#3c3c8c" font-family='"Liberation Sans",sans-serif' font-weight="normal" font-style="normal" text-anchor="start" textLength="12" lengthAdjust="spacing" stroke="#3c3c8c" stroke-width="0.22">PQ4</text>
<text x="0" y="0" transform="translate(246 344.5) scale(1 1.25)" font-size="5.20" fill="#3c3c8c" font-family='"Liberation Sans",sans-serif' font-weight="normal" font-style="normal" text-anchor="start" textLength="49" lengthAdjust="spacing" stroke="#3c3c8c" stroke-width="0.22">MTN7002ZHS3</text>
<circle cx="240" cy="291" r="2.8" fill="#ff00ff"/>
<circle cx="302.5" cy="291" r="2.8" fill="#ff00ff"/>
<circle cx="240" cy="361.5" r="2.8" fill="#ff00ff"/>
<path d="M238.5 361.5 L302.5 361.5 L302.5 337" stroke="#ad6d96" stroke-width="1.25" fill="none"/>
<path d="M302.5 291 L302.5 315" stroke="#ad6d96" stroke-width="1.25" fill="none"/>
<path d="M302.5 315 L302.5 322" stroke="#ff7a7a" stroke-width="1.25" fill="none"/>
<path d="M293.5 323 L311.5 323" stroke="#3b3bf2" stroke-width="1.3" fill="none"/>
<path d="M293.5 327 L311.5 327" stroke="#3b3bf2" stroke-width="1.3" fill="none"/>
<path d="M302.5 327.5 L302.5 337" stroke="#ff7a7a" stroke-width="1.25" fill="none"/>
<text x="0" y="0" transform="translate(309 322) scale(1 1.25)" font-size="5.20" fill="#3c3c8c" font-family='"Liberation Sans",sans-serif' font-weight="normal" font-style="normal" text-anchor="start" textLength="19" lengthAdjust="spacing" stroke="#3c3c8c" stroke-width="0.22">PC 33</text>
<text x="0" y="0" transform="translate(309 337.5) scale(1 1.25)" font-size="5.20" fill="#3c3c8c" font-family='"Liberation Sans",sans-serif' font-weight="normal" font-style="normal" text-anchor="start" textLength="41" lengthAdjust="spacing" stroke="#3c3c8c" stroke-width="0.22">* 1u_25V_08</text>
<text x="0" y="0" transform="translate(376 217.8) scale(1 1.25)" font-size="6.00" fill="#333" font-family='"Liberation Sans",sans-serif' font-weight="normal" font-style="normal" text-anchor="start" textLength="17.5" lengthAdjust="spacing" stroke="#333" stroke-width="0.22">3.3 V</text>
<circle cx="388.5" cy="221.8" r="3.3" fill="none" stroke="#ff7a7a" stroke-width="1.1"/>
<path d="M390 225 L390 331" stroke="#ad6d96" stroke-width="1.25" fill="none"/>
<path d="M390 331 L390 338" stroke="#ff7a7a" stroke-width="1.25" fill="none"/>
<path d="M382 339.5 L398 339.5" stroke="#3b3bf2" stroke-width="1.3" fill="none"/>
<path d="M382 343.5 L398 343.5" stroke="#3b3bf2" stroke-width="1.3" fill="none"/>
<path d="M390 344 L390 352" stroke="#ff7a7a" stroke-width="1.25" fill="none"/>
<path d="M390 352 L390 386" stroke="#ad6d96" stroke-width="1.25" fill="none"/>
<text x="0" y="0" transform="translate(356.5 241.3)" font-size="15.50" fill="#111" font-family='"Liberation Serif",serif' font-weight="bold" font-style="normal" text-anchor="start" textLength="22.5" lengthAdjust="spacingAndGlyphs">2A</text>
<circle cx="390" cy="251.5" r="2.8" fill="#ff00ff"/>
<circle cx="390" cy="259" r="2.8" fill="#ff00ff"/>
<circle cx="390" cy="315" r="2.8" fill="#ff00ff"/>
<path d="M390 251 L413 251" stroke="#ad6d96" stroke-width="1.25" fill="none"/>
<path d="M413 251 L437 251" stroke="#ff7a7a" stroke-width="1.25" fill="none"/>
<path d="M390 259 L413 259" stroke="#ad6d96" stroke-width="1.25" fill="none"/>
<path d="M413 259 L437 259" stroke="#ff7a7a" stroke-width="1.25" fill="none"/>
<path d="M390 315 L349.5 315 L349.5 340" stroke="#ad6d96" stroke-width="1.25" fill="none"/>
<path d="M349.5 340 L349.5 347" stroke="#ff7a7a" stroke-width="1.25" fill="none"/>
<path d="M341.5 348 L357.5 348" stroke="#3b3bf2" stroke-width="1.3" fill="none"/>
<path d="M341.5 352 L357.5 352" stroke="#3b3bf2" stroke-width="1.3" fill="none"/>
<path d="M349.5 352.5 L349.5 360" stroke="#ff7a7a" stroke-width="1.25" fill="none"/>
<path d="M349.5 360 L349.5 386" stroke="#ad6d96" stroke-width="1.25" fill="none"/>
<path d="M341.5 386.5 L357.5 386.5" stroke="#ff5555" stroke-width="1.1" fill="none"/>
<path d="M344.0 389.5 L355.0 389.5" stroke="#ff5555" stroke-width="1.1" fill="none"/>
<path d="M346.5 392.5 L352.5 392.5" stroke="#ff5555" stroke-width="1.1" fill="none"/>
<path d="M382 386.5 L398 386.5" stroke="#ff5555" stroke-width="1.1" fill="none"/>
<path d="M384.5 389.5 L395.5 389.5" stroke="#ff5555" stroke-width="1.1" fill="none"/>
<path d="M387 392.5 L393 392.5" stroke="#ff5555" stroke-width="1.1" fill="none"/>
<text x="0" y="0" transform="translate(356 337.5) scale(1 1.25)" font-size="5.20" fill="#3c3c8c" font-family='"Liberation Sans",sans-serif' font-weight="normal" font-style="normal" text-anchor="start" textLength="23" lengthAdjust="spacing" stroke="#3c3c8c" stroke-width="0.22">P C152</text>
<text x="0" y="0" transform="translate(397 337.5) scale(1 1.25)" font-size="5.20" fill="#3c3c8c" font-family='"Liberation Sans",sans-serif' font-weight="normal" font-style="normal" text-anchor="start" textLength="21" lengthAdjust="spacing" stroke="#3c3c8c" stroke-width="0.22">PC 159</text>
<text x="0" y="0" transform="translate(362.5 407) rotate(-90) scale(1 1.25)" font-size="5.20" fill="#3c3c8c" font-family='"Liberation Sans",sans-serif' font-weight="normal" font-style="normal" text-anchor="start" textLength="59" lengthAdjust="spacing" stroke="#3c3c8c" stroke-width="0.22">0.1u_50V_Y5V_06</text>
<text x="0" y="0" transform="translate(401.5 406) rotate(-90) scale(1 1.25)" font-size="5.20" fill="#3c3c8c" font-family='"Liberation Sans",sans-serif' font-weight="normal" font-style="normal" text-anchor="start" textLength="61" lengthAdjust="spacing" stroke="#3c3c8c" stroke-width="0.22">10u_6.3V_X5R_06</text>
<rect x="437" y="243" width="65" height="80.5" fill="none" stroke="#3b3bf2" stroke-width="1.3"/>
<text x="0" y="0" transform="translate(437 241.5) scale(1 1.25)" font-size="5.20" fill="#3c3c8c" font-family='"Liberation Sans",sans-serif' font-weight="normal" font-style="normal" text-anchor="start" textLength="12" lengthAdjust="spacing" stroke="#3c3c8c" stroke-width="0.22">PU7</text>
<text x="0" y="0" transform="translate(437 330.5)" font-size="9.00" fill="#22227a" font-family='"Liberation Sans",sans-serif' font-weight="bold" font-style="normal" text-anchor="start" textLength="29" lengthAdjust="spacingAndGlyphs">AX6610</text>
<text x="0" y="0" transform="translate(441 253.5) scale(1 1.25)" font-size="5.20" fill="#3c3c8c" font-family='"Liberation Sans",sans-serif' font-weight="normal" font-style="normal" text-anchor="start" textLength="15.6" lengthAdjust="spacing" stroke="#3c3c8c" stroke-width="0.22">V IN</text>
<text x="0" y="0" transform="translate(441 262) scale(1 1.25)" font-size="5.20" fill="#3c3c8c" font-family='"Liberation Sans",sans-serif' font-weight="normal" font-style="normal" text-anchor="start" textLength="15.6" lengthAdjust="spacing" stroke="#3c3c8c" stroke-width="0.22">V IN</text>
<text x="0" y="0" transform="translate(441 270.5) scale(1 1.25)" font-size="5.20" fill="#3c3c8c" font-family='"Liberation Sans",sans-serif' font-weight="normal" font-style="normal" text-anchor="start" textLength="15.6" lengthAdjust="spacing" stroke="#3c3c8c" stroke-width="0.22">P OK</text>
<text x="0" y="0" transform="translate(441 293) scale(1 1.25)" font-size="5.20" fill="#3c3c8c" font-family='"Liberation Sans",sans-serif' font-weight="normal" font-style="normal" text-anchor="start" textLength="11.7" lengthAdjust="spacing" stroke="#3c3c8c" stroke-width="0.22">E N</text>
<text x="0" y="0" transform="translate(441 308.5) scale(1 1.25)" font-size="5.20" fill="#3c3c8c" font-family='"Liberation Sans",sans-serif' font-weight="normal" font-style="normal" text-anchor="start" textLength="15.6" lengthAdjust="spacing" stroke="#3c3c8c" stroke-width="0.22">G ND</text>
<text x="0" y="0" transform="translate(497.5 253.5) scale(1 1.25)" font-size="5.20" fill="#3c3c8c" font-family='"Liberation Sans",sans-serif' font-weight="normal" font-style="normal" text-anchor="end" textLength="20" lengthAdjust="spacing" stroke="#3c3c8c" stroke-width="0.22">VCN TL</text>
<text x="0" y="0" transform="translate(497.5 270.5) scale(1 1.25)" font-size="5.20" fill="#3c3c8c" font-family='"Liberation Sans",sans-serif' font-weight="normal" font-style="normal" text-anchor="end" textLength="18" lengthAdjust="spacing" stroke="#3c3c8c" stroke-width="0.22">V OUT</text>
<text x="0" y="0" transform="translate(497.5 286) scale(1 1.25)" font-size="5.20" fill="#3c3c8c" font-family='"Liberation Sans",sans-serif' font-weight="normal" font-style="normal" text-anchor="end" textLength="18" lengthAdjust="spacing" stroke="#3c3c8c" stroke-width="0.22">V OUT</text>
<text x="0" y="0" transform="translate(497.5 308.5) scale(1 1.25)" font-size="5.20" fill="#3c3c8c" font-family='"Liberation Sans",sans-serif' font-weight="normal" font-style="normal" text-anchor="end" textLength="12" lengthAdjust="spacing" stroke="#3c3c8c" stroke-width="0.22">VFB</text>
<text x="0" y="0" transform="translate(425.5 249) scale(1 1.25)" font-size="5.60" fill="#333" font-family='"Liberation Sans",sans-serif' font-weight="normal" font-style="normal" text-anchor="start" textLength="4" lengthAdjust="spacing" stroke="#333" stroke-width="0.22">5</text>
<text x="0" y="0" transform="translate(425.5 256.5) scale(1 1.25)" font-size="5.60" fill="#333" font-family='"Liberation Sans",sans-serif' font-weight="normal" font-style="normal" text-anchor="start" textLength="4" lengthAdjust="spacing" stroke="#333" stroke-width="0.22">9</text>
<text x="0" y="0" transform="translate(425.5 265.5) scale(1 1.25)" font-size="5.60" fill="#333" font-family='"Liberation Sans",sans-serif' font-weight="normal" font-style="normal" text-anchor="start" textLength="4" lengthAdjust="spacing" stroke="#333" stroke-width="0.22">7</text>
<text x="0" y="0" transform="translate(425.5 288) scale(1 1.25)" font-size="5.60" fill="#333" font-family='"Liberation Sans",sans-serif' font-weight="normal" font-style="normal" text-anchor="start" textLength="4" lengthAdjust="spacing" stroke="#333" stroke-width="0.22">8</text>
<text x="0" y="0" transform="translate(425.5 303) scale(1 1.25)" font-size="5.60" fill="#333" font-family='"Liberation Sans",sans-serif' font-weight="normal" font-style="normal" text-anchor="start" textLength="4" lengthAdjust="spacing" stroke="#333" stroke-width="0.22">1</text>
<text x="0" y="0" transform="translate(503 249) scale(1 1.25)" font-size="5.60" fill="#333" font-family='"Liberation Sans",sans-serif' font-weight="normal" font-style="normal" text-anchor="start" textLength="4" lengthAdjust="spacing" stroke="#333" stroke-width="0.22">6</text>
<text x="0" y="0" transform="translate(503 265.5) scale(1 1.25)" font-size="5.60" fill="#333" font-family='"Liberation Sans",sans-serif' font-weight="normal" font-style="normal" text-anchor="start" textLength="4" lengthAdjust="spacing" stroke="#333" stroke-width="0.22">4</text>
<text x="0" y="0" transform="translate(503 281) scale(1 1.25)" font-size="5.60" fill="#333" font-family='"Liberation Sans",sans-serif' font-weight="normal" font-style="normal" text-anchor="start" textLength="4" lengthAdjust="spacing" stroke="#333" stroke-width="0.22">3</text>
<text x="0" y="0" transform="translate(503 303) scale(1 1.25)" font-size="5.60" fill="#333" font-family='"Liberation Sans",sans-serif' font-weight="normal" font-style="normal" text-anchor="start" textLength="4" lengthAdjust="spacing" stroke="#333" stroke-width="0.22">2</text>
<path d="M502 251 L520 251" stroke="#ff7a7a" stroke-width="1.25" fill="none"/>
<path d="M502 268 L520 268" stroke="#ff7a7a" stroke-width="1.25" fill="none"/>
<path d="M502 283.5 L520 283.5" stroke="#ff7a7a" stroke-width="1.25" fill="none"/>
<path d="M502 306 L520 306" stroke="#ff7a7a" stroke-width="1.25" fill="none"/>
<path d="M413 306 L437 306" stroke="#ff7a7a" stroke-width="1.25" fill="none"/>
<path d="M413 306 L405 306 L405 314" stroke="#ad6d96" stroke-width="1.25" fill="none"/>
<path d="M397 314 L413 314" stroke="#ff5555" stroke-width="1.1" fill="none"/>
<path d="M399.5 317 L410.5 317" stroke="#ff5555" stroke-width="1.1" fill="none"/>
<path d="M402 320 L408 320" stroke="#ff5555" stroke-width="1.1" fill="none"/>
<rect x="524" y="180" width="88" height="81" fill="none" stroke="#00e000" stroke-width="4.2"/>
<text x="0" y="0" transform="translate(541 193.5) scale(1 1.25)" font-size="5.20" fill="#555" font-family='"Liberation Sans",sans-serif' font-weight="normal" font-style="normal" text-anchor="start" textLength="51" lengthAdjust="spacing" stroke="#555" stroke-width="0.22">? ? ? ?  PIN6?</text>
<path d="M520 251 L531 251 L531 202.5 L589.3 202.5" stroke="#ad6d96" stroke-width="1.25" fill="none"/>
<circle cx="592.5" cy="202.5" r="3.2" fill="none" stroke="#ff7a7a" stroke-width="1.1"/>
<text x="0" y="0" transform="translate(596 206) scale(1 1.25)" font-size="5.20" fill="#3c3c8c" font-family='"Liberation Sans",sans-serif' font-weight="normal" font-style="normal" text-anchor="start" textLength="8" lengthAdjust="spacing" stroke="#3c3c8c" stroke-width="0.22">5V</text>
<circle cx="564" cy="204.5" r="2.8" fill="#ff00ff"/>
<path d="M562.5 202.5 L562.5 214" stroke="#ad6d96" stroke-width="1.25" fill="none"/>
<path d="M562.5 214 L562.5 228" stroke="#ff7a7a" stroke-width="1.25" fill="none"/>
<path d="M555.5 229 L569.5 229" stroke="#3b3bf2" stroke-width="1.3" fill="none"/>
<path d="M555.5 233.5 L569.5 233.5" stroke="#3b3bf2" stroke-width="1.3" fill="none"/>
<path d="M562.5 233.5 L562.5 249" stroke="#ff7a7a" stroke-width="1.25" fill="none"/>
<path d="M554.5 249.5 L570.5 249.5" stroke="#ff5555" stroke-width="1.1" fill="none"/>
<path d="M557.0 252.5 L568.0 252.5" stroke="#ff5555" stroke-width="1.1" fill="none"/>
<path d="M559.5 255.5 L565.5 255.5" stroke="#ff5555" stroke-width="1.1" fill="none"/>
<text x="0" y="0" transform="translate(571 224.5) scale(1 1.25)" font-size="5.20" fill="#3c3c8c" font-family='"Liberation Sans",sans-serif' font-weight="normal" font-style="normal" text-anchor="start" textLength="19" lengthAdjust="spacing" stroke="#3c3c8c" stroke-width="0.22">PC160</text>
<text x="0" y="0" transform="translate(571 241.5) scale(1 1.25)" font-size="5.20" fill="#3c3c8c" font-family='"Liberation Sans",sans-serif' font-weight="normal" font-style="normal" text-anchor="start" textLength="35" lengthAdjust="spacing" stroke="#3c3c8c" stroke-width="0.22">1u_25V_08</text>
<path d="M520 268 L690 268" stroke="#ad6d96" stroke-width="1.25" fill="none"/>
<path d="M690 268 L697 268" stroke="#ff7a7a" stroke-width="1.25" fill="none"/>
<circle cx="531" cy="268" r="2.8" fill="#ff00ff"/>
<circle cx="602.5" cy="268" r="2.8" fill="#ff00ff"/>
<circle cx="627.5" cy="268" r="2.8" fill="#ff00ff"/>
<circle cx="650" cy="268" r="2.8" fill="#ff00ff"/>
<circle cx="675" cy="268" r="2.8" fill="#ff00ff"/>
<path d="M520 283.5 L531 283.5 L531 268" stroke="#ad6d96" stroke-width="1.25" fill="none"/>
<path d="M520 306 L549 306" stroke="#ad6d96" stroke-width="1.25" fill="none"/>
<path d="M549 306 L556 306" stroke="#ff7a7a" stroke-width="1.25" fill="none"/>
<path d="M556 306 L557.98 308.2 L562.6 303.4 L567.0 308.2 L571.4 303.4 L576.02 308.2 L578.0 306" stroke="#3b3bf2" stroke-width="1.2" fill="none"/>
<path d="M578 306 L585 306" stroke="#ff7a7a" stroke-width="1.25" fill="none"/>
<path d="M585 306 L602.5 306" stroke="#ad6d96" stroke-width="1.25" fill="none"/>
<path d="M602.5 268 L602.5 330" stroke="#ad6d96" stroke-width="1.25" fill="none"/>
<circle cx="531" cy="307.5" r="2.8" fill="#ff00ff"/>
<circle cx="602.5" cy="307.5" r="2.8" fill="#ff00ff"/>
<circle cx="531" cy="330.5" r="2.8" fill="#ff00ff"/>
<path d="M531 306 L531 337" stroke="#ad6d96" stroke-width="1.25" fill="none"/>
<path d="M531 330 L549 330" stroke="#ad6d96" stroke-width="1.25" fill="none"/>
<path d="M549 330 L563 330" stroke="#ff7a7a" stroke-width="1.25" fill="none"/>
<path d="M565.5 325 L565.5 336" stroke="#3b3bf2" stroke-width="1.3" fill="none"/>
<path d="M569 325 L569 336" stroke="#3b3bf2" stroke-width="1.3" fill="none"/>
<path d="M571 330 L585 330" stroke="#ff7a7a" stroke-width="1.25" fill="none"/>
<path d="M585 330 L602.5 330 L602.5 306" stroke="#ad6d96" stroke-width="1.25" fill="none"/>
<path d="M531 337 L531 345" stroke="#ff7a7a" stroke-width="1.25" fill="none"/>
<path d="M531 345 L528.4 347.07 L533.6 351.9 L528.4 356.5 L533.6 361.1 L528.4 365.93 L531 368.0" stroke="#3b3bf2" stroke-width="1.2" fill="none"/>
<path d="M531 368 L531 376" stroke="#ff7a7a" stroke-width="1.25" fill="none"/>
<path d="M531 376 L531 385" stroke="#ad6d96" stroke-width="1.25" fill="none"/>
<path d="M523 385.5 L539 385.5" stroke="#ff5555" stroke-width="1.1" fill="none"/>
<path d="M525.5 388.5 L536.5 388.5" stroke="#ff5555" stroke-width="1.1" fill="none"/>
<path d="M528 391.5 L534 391.5" stroke="#ff5555" stroke-width="1.1" fill="none"/>
<text x="0" y="0" transform="translate(556 290.5) scale(1 1.25)" font-size="5.20" fill="#3c3c8c" font-family='"Liberation Sans",sans-serif' font-weight="normal" font-style="normal" text-anchor="start" textLength="21" lengthAdjust="spacing" stroke="#3c3c8c" stroke-width="0.22">PR163</text>
<text x="0" y="0" transform="translate(556 298.5) scale(1 1.25)" font-size="5.20" fill="#3c3c8c" font-family='"Liberation Sans",sans-serif' font-weight="normal" font-style="normal" text-anchor="start" textLength="44" lengthAdjust="spacing" stroke="#3c3c8c" stroke-width="0.22">1.27K_1%_04</text>
<text x="0" y="0" transform="translate(556 321.5) scale(1 1.25)" font-size="5.20" fill="#3c3c8c" font-family='"Liberation Sans",sans-serif' font-weight="normal" font-style="normal" text-anchor="start" textLength="21" lengthAdjust="spacing" stroke="#3c3c8c" stroke-width="0.22">PC151</text>
<text x="0" y="0" transform="translate(556 343.5) scale(1 1.25)" font-size="5.20" fill="#3c3c8c" font-family='"Liberation Sans",sans-serif' font-weight="normal" font-style="normal" text-anchor="start" textLength="59" lengthAdjust="spacing" stroke="#3c3c8c" stroke-width="0.22">82p_50V_NPO_04</text>
<text x="0" y="0" transform="translate(540 360.5) scale(1 1.25)" font-size="5.20" fill="#3c3c8c" font-family='"Liberation Sans",sans-serif' font-weight="normal" font-style="normal" text-anchor="start" textLength="20" lengthAdjust="spacing" stroke="#3c3c8c" stroke-width="0.22">PR164</text>
<text x="0" y="0" transform="translate(540 369.5) scale(1 1.25)" font-size="5.20" fill="#3c3c8c" font-family='"Liberation Sans",sans-serif' font-weight="normal" font-style="normal" text-anchor="start" textLength="32" lengthAdjust="spacing" stroke="#3c3c8c" stroke-width="0.22">1K_1%_04</text>
<path d="M627.5 268 L627.5 331" stroke="#ad6d96" stroke-width="1.25" fill="none"/>
<path d="M627.5 331 L627.5 339" stroke="#ff7a7a" stroke-width="1.25" fill="none"/>
<path d="M619.0 339.8 L636.0 339.8" stroke="#3b3bf2" stroke-width="1.3" fill="none"/>
<path d="M619.0 344.3 L636.0 344.3" stroke="#3b3bf2" stroke-width="1.3" fill="none"/>
<path d="M627.5 344.5 L627.5 353" stroke="#ff7a7a" stroke-width="1.25" fill="none"/>
<path d="M627.5 353 L627.5 386.5" stroke="#ad6d96" stroke-width="1.25" fill="none"/>
<path d="M619.5 386.7 L635.5 386.7" stroke="#ff5555" stroke-width="1.1" fill="none"/>
<path d="M622.0 389.7 L633.0 389.7" stroke="#ff5555" stroke-width="1.1" fill="none"/>
<path d="M624.5 392.7 L630.5 392.7" stroke="#ff5555" stroke-width="1.1" fill="none"/>
<text x="0" y="0" transform="translate(641.0 335) rotate(-90) scale(1 1.25)" font-size="5.20" fill="#3c3c8c" font-family='"Liberation Sans",sans-serif' font-weight="normal" font-style="normal" text-anchor="start" textLength="61" lengthAdjust="spacing" stroke="#3c3c8c" stroke-width="0.22">10u_6.3V_X5R_06</text>
<text x="0" y="0" transform="translate(641.0 377) rotate(-90) scale(1 1.25)" font-size="5.20" fill="#3c3c8c" font-family='"Liberation Sans",sans-serif' font-weight="normal" font-style="normal" text-anchor="start" textLength="21" lengthAdjust="spacing" stroke="#3c3c8c" stroke-width="0.22">PC148</text>
<path d="M650 268 L650 331" stroke="#ad6d96" stroke-width="1.25" fill="none"/>
<path d="M650 331 L650 339" stroke="#ff7a7a" stroke-width="1.25" fill="none"/>
<path d="M641.5 339.8 L658.5 339.8" stroke="#3b3bf2" stroke-width="1.3" fill="none"/>
<path d="M641.5 344.3 L658.5 344.3" stroke="#3b3bf2" stroke-width="1.3" fill="none"/>
<path d="M650 344.5 L650 353" stroke="#ff7a7a" stroke-width="1.25" fill="none"/>
<path d="M650 353 L650 386.5" stroke="#ad6d96" stroke-width="1.25" fill="none"/>
<path d="M642 386.7 L658 386.7" stroke="#ff5555" stroke-width="1.1" fill="none"/>
<path d="M644.5 389.7 L655.5 389.7" stroke="#ff5555" stroke-width="1.1" fill="none"/>
<path d="M647 392.7 L653 392.7" stroke="#ff5555" stroke-width="1.1" fill="none"/>
<text x="0" y="0" transform="translate(663.5 335) rotate(-90) scale(1 1.25)" font-size="5.20" fill="#3c3c8c" font-family='"Liberation Sans",sans-serif' font-weight="normal" font-style="normal" text-anchor="start" textLength="61" lengthAdjust="spacing" stroke="#3c3c8c" stroke-width="0.22">10u_6.3V_X5R_06</text>
<text x="0" y="0" transform="translate(663.5 377) rotate(-90) scale(1 1.25)" font-size="5.20" fill="#3c3c8c" font-family='"Liberation Sans",sans-serif' font-weight="normal" font-style="normal" text-anchor="start" textLength="21" lengthAdjust="spacing" stroke="#3c3c8c" stroke-width="0.22">PC147</text>
<path d="M674.5 268 L674.5 331" stroke="#ad6d96" stroke-width="1.25" fill="none"/>
<path d="M674.5 331 L674.5 339" stroke="#ff7a7a" stroke-width="1.25" fill="none"/>
<path d="M666.0 339.8 L683.0 339.8" stroke="#3b3bf2" stroke-width="1.3" fill="none"/>
<path d="M666.0 344.3 L683.0 344.3" stroke="#3b3bf2" stroke-width="1.3" fill="none"/>
<path d="M674.5 344.5 L674.5 353" stroke="#ff7a7a" stroke-width="1.25" fill="none"/>
<path d="M674.5 353 L674.5 386.5" stroke="#ad6d96" stroke-width="1.25" fill="none"/>
<path d="M666.5 386.7 L682.5 386.7" stroke="#ff5555" stroke-width="1.1" fill="none"/>
<path d="M669.0 389.7 L680.0 389.7" stroke="#ff5555" stroke-width="1.1" fill="none"/>
<path d="M671.5 392.7 L677.5 392.7" stroke="#ff5555" stroke-width="1.1" fill="none"/>
<text x="0" y="0" transform="translate(688.0 335) rotate(-90) scale(1 1.25)" font-size="5.20" fill="#3c3c8c" font-family='"Liberation Sans",sans-serif' font-weight="normal" font-style="normal" text-anchor="start" textLength="61" lengthAdjust="spacing" stroke="#3c3c8c" stroke-width="0.22">0.1u_10V_X7R_04</text>
<text x="0" y="0" transform="translate(688.0 377) rotate(-90) scale(1 1.25)" font-size="5.20" fill="#3c3c8c" font-family='"Liberation Sans",sans-serif' font-weight="normal" font-style="normal" text-anchor="start" textLength="21" lengthAdjust="spacing" stroke="#3c3c8c" stroke-width="0.22">PC149</text>
<text x="0" y="0" transform="translate(635 256.8)" font-size="15.50" fill="#111" font-family='"Liberation Serif",serif' font-weight="bold" font-style="normal" text-anchor="start" textLength="22.5" lengthAdjust="spacingAndGlyphs">3A</text>
<text x="0" y="0" transform="translate(665 248.5) scale(1 1.25)" font-size="5.20" fill="#333" font-family='"Liberation Sans",sans-serif' font-weight="normal" font-style="normal" text-anchor="start" textLength="19" lengthAdjust="spacing" stroke="#333" stroke-width="0.22">VS1.8</text>
<circle cx="675" cy="253" r="3" fill="none" stroke="#ff7a7a" stroke-width="1.1"/>
<path d="M675 256 L675 268" stroke="#ad6d96" stroke-width="1.25" fill="none"/>
<text x="0" y="0" transform="translate(689.5 263) scale(1 1.25)" font-size="4.80" fill="#333" font-family='"Liberation Sans",sans-serif' font-weight="normal" font-style="normal" text-anchor="start" textLength="3" lengthAdjust="spacing" stroke="#333" stroke-width="0.22">1</text>
<path d="M703.6 259.6 A8.6 8.6 0 0 0 703.6 276.4 M708.4 259.6 A8.6 8.6 0 0 1 708.4 276.4 M703.6 259.6 V276.4 M708.4 259.6 V276.4" stroke="#3b3bf2" stroke-width="1.2" fill="none"/>
<text x="0" y="0" transform="translate(697 256.5) scale(1 1.25)" font-size="5.20" fill="#3c3c8c" font-family='"Liberation Sans",sans-serif' font-weight="normal" font-style="normal" text-anchor="start" textLength="12" lengthAdjust="spacing" stroke="#3c3c8c" stroke-width="0.22">PJ6</text>
<text x="0" y="0" transform="translate(719.5 263) scale(1 1.25)" font-size="4.80" fill="#333" font-family='"Liberation Sans",sans-serif' font-weight="normal" font-style="normal" text-anchor="start" textLength="3.5" lengthAdjust="spacing" stroke="#333" stroke-width="0.22">2</text>
<text x="0" y="0" transform="translate(697 281.5) scale(1 1.25)" font-size="5.20" fill="#3c3c8c" font-family='"Liberation Sans",sans-serif' font-weight="normal" font-style="normal" text-anchor="start" textLength="32" lengthAdjust="spacing" stroke="#3c3c8c" stroke-width="0.22">OPEN_3A</text>
<path d="M715 268 L722 268" stroke="#ff7a7a" stroke-width="1.25" fill="none"/>
<path d="M722 268 L738.5 268 L738.5 256.3" stroke="#ad6d96" stroke-width="1.25" fill="none"/>
<circle cx="738.5" cy="253" r="3.1" fill="none" stroke="#ff7a7a" stroke-width="1.1"/>
<text x="0" y="0" transform="translate(733 248.5) scale(1 1.25)" font-size="5.20" fill="#333" font-family='"Liberation Sans",sans-serif' font-weight="normal" font-style="normal" text-anchor="start" textLength="19" lengthAdjust="spacing" stroke="#333" stroke-width="0.22">1.8VS</text>
<text x="0" y="0" transform="translate(667 224.5)" font-size="23.50" fill="#0a0af0" font-family='"Liberation Mono",monospace' font-weight="bold" font-style="normal" text-anchor="start" textLength="74" lengthAdjust="spacingAndGlyphs">1.8VS</text>
<text x="0" y="0" transform="translate(421.5 371.3)" font-size="10.40" fill="#5a5a5a" font-family='"Liberation Mono",monospace' font-weight="normal" font-style="normal" text-anchor="start" textLength="36.96" lengthAdjust="spacingAndGlyphs">GS7113</text>
<text x="0" y="0" transform="translate(421.5 384.5)" font-size="10.40" fill="#5a5a5a" font-family='"Liberation Mono",monospace' font-weight="normal" font-style="normal" text-anchor="start" textLength="86.24000000000001" lengthAdjust="spacingAndGlyphs">6-02-07113-320</text>
<text x="0" y="0" transform="translate(421.5 395.5)" font-size="10.40" fill="#5a5a5a" font-family='"Liberation Mono",monospace' font-weight="normal" font-style="normal" text-anchor="start" textLength="36.96" lengthAdjust="spacingAndGlyphs">AX6610</text>
<text x="0" y="0" transform="translate(421.5 409.2)" font-size="10.40" fill="#5a5a5a" font-family='"Liberation Mono",monospace' font-weight="normal" font-style="normal" text-anchor="start" textLength="86.24000000000001" lengthAdjust="spacingAndGlyphs">6-02-06610-320</text>
<text x="0" y="0" transform="translate(976 328.5) scale(1 1.25)" font-size="5.20" fill="#ff2e2e" font-family='"Liberation Sans",sans-serif' font-weight="normal" font-style="normal" text-anchor="start" textLength="14" lengthAdjust="spacing" stroke="#ff2e2e" stroke-width="0.22">7,20</text>
<text x="0" y="0" transform="translate(915 333.5) scale(1 1.25)" font-size="5.20" fill="#ff2e2e" font-family='"Liberation Sans",sans-serif' font-weight="normal" font-style="normal" text-anchor="start" textLength="75" lengthAdjust="spacing" stroke="#ff2e2e" stroke-width="0.22">12,30,31,32,34,35,36,3</text>
<text x="0" y="0" transform="translate(935 342.5) scale(1 1.25)" font-size="5.20" fill="#ff2e2e" font-family='"Liberation Sans",sans-serif' font-weight="normal" font-style="normal" text-anchor="start" textLength="55" lengthAdjust="spacing" stroke="#ff2e2e" stroke-width="0.22">21,26,27,30,31,3</text>
<text x="0" y="0" transform="translate(818 349.5) scale(1 1.25)" font-size="5.20" fill="#ff2e2e" font-family='"Liberation Sans",sans-serif' font-weight="normal" font-style="normal" text-anchor="start" textLength="172" lengthAdjust="spacing" stroke="#ff2e2e" stroke-width="0.22">3,4,12,14,15,16,18,19,20,21,23,24,25,29,30,31,34,3</text>
<text x="0" y="0" transform="translate(900 358.5) scale(1 1.25)" font-size="5.20" fill="#ff2e2e" font-family='"Liberation Sans",sans-serif' font-weight="normal" font-style="normal" text-anchor="start" textLength="90" lengthAdjust="spacing" stroke="#ff2e2e" stroke-width="0.22">4,9,10,11,21,23,27,29,31,3</text>
<text x="0" y="0" transform="translate(976 364.5) scale(1 1.25)" font-size="5.20" fill="#ff2e2e" font-family='"Liberation Sans",sans-serif' font-weight="normal" font-style="normal" text-anchor="start" textLength="14" lengthAdjust="spacing" stroke="#ff2e2e" stroke-width="0.22">10,1</text>
</g>
<rect x="988" y="74.5" width="12" height="457.5" fill="#f0f0f0" rx="0" />
<path d="M990.8 84.5 L993.7 81.3 L996.6 84.5 Z" stroke="none" stroke-width="1" fill="#606060" />
<path d="M990.8 511.5 L993.7 514.7 L996.6 511.5 Z" stroke="none" stroke-width="1" fill="#606060" />
<rect x="989.5" y="461.5" width="8.5" height="12.5" fill="#c2c2c2" rx="0" />
<rect x="0" y="515" width="988" height="5" fill="#585858" rx="0" />
<rect x="0" y="520" width="1000" height="12.5" fill="#f9f9f9" rx="0" />
<rect x="0" y="521.5" width="988" height="9.5" fill="#efefef" rx="0" />
<rect x="337" y="522" width="459" height="8.8" fill="#c2c2c2" rx="0" />
<path d="M3.5 524.5 L7 521.8 V527.2 Z" stroke="none" stroke-width="1" fill="#505050" />
<rect x="988" y="520" width="12" height="12.5" fill="#e9e9e9" rx="0" />
<rect x="625.5" y="103.5" width="86.5" height="17.5" fill="#fff" rx="0" stroke="#787878" stroke-width="1"/>
<text x="631" y="116" font-size="10" fill="#333" font-family='"Liberation Sans",sans-serif' font-weight="normal" text-anchor="start" textLength="76" lengthAdjust="spacingAndGlyphs" >Número de acessos</text>
<g filter="url(#sh)">
<rect x="509.5" y="48.5" width="281.5" height="31.5" fill="#ffffff" rx="4" />
</g>
<text x="521" y="67.5" font-size="9" fill="#333" font-family='"Liberation Sans",sans-serif' textLength="51.5" lengthAdjust="spacing">S_PWRGD</text>
<text x="683.5" y="67.5" font-size="10" fill="#555" font-family='"Liberation Sans",sans-serif' font-weight="normal" text-anchor="start" textLength="13.5" lengthAdjust="spacingAndGlyphs" >2/2</text>
<line x1="708.5" y1="54" x2="708.5" y2="74.5" stroke="#e2e2e2" stroke-width="1" />
<path d="M722 67 L727 62 L732 67" stroke="#555" stroke-width="1.1" fill="none" />
<path d="M746 62 L751 67 L756 62" stroke="#555" stroke-width="1.1" fill="none" />
<path d="M769.2 60.2 L777.8 68.8 M777.8 60.2 L769.2 68.8" stroke="#555" stroke-width="1.1" fill="none" />
<rect x="0" y="532.5" width="1000" height="29.5" fill="url(#tb)" rx="0" />
<path d="M11.5 541.3 L17 540.5 V546.2 H11.5 Z M17.8 540.4 L24.5 539.4 V546.2 H17.8 Z M11.5 547 H17 V552.7 L11.5 551.9 Z M17.8 547 H24.5 V553.8 L17.8 552.8 Z" stroke="none" stroke-width="1" fill="#f4f4f4" />
<path d="M47 542 H55 M47 552 H55 M48 542 V552 M54 542 V552 M48 546 H54 M48 548.5 H54" stroke="#e8e8e8" stroke-width="1" fill="none" />
<circle cx="57.5" cy="545" r="1.1" fill="#e8e8e8"/>
<line x1="57.5" y1="547" x2="57.5" y2="553" stroke="#e8e8e8" stroke-width="1" />
<rect x="72.5" y="533" width="35" height="28" fill="#6b4a4b" rx="0" />
<rect x="72.5" y="560.5" width="35" height="1.5" fill="#c8c8c8" rx="0" />
<defs><linearGradient id="eg" x1="0" y1="0" x2="1" y2="1"><stop offset="0" stop-color="#35c1f1"/><stop offset="0.55" stop-color="#1e88d8"/><stop offset="1" stop-color="#0c59a4"/></linearGradient><linearGradient id="eg2" x1="0" y1="0" x2="1" y2="0"><stop offset="0" stop-color="#3bb3e8"/><stop offset="1" stop-color="#6ad36a"/></linearGradient></defs>
<circle cx="90" cy="547.3" r="8.6" fill="url(#eg)"/>
<path d="M84 545 Q86 539 92 539.5 Q98.5 540.5 98.6 547 Q98.5 550 95 550 H89 Q88.5 553 92 554.5 Q87 555.5 84.5 551.5 Q82.5 548 84 545 Z" stroke="none" stroke-width="1" fill="url(#eg2)" />
<path d="M89 550 Q88.5 546 92.5 545.5 Q96 546 95.5 550 Z" stroke="none" stroke-width="1" fill="#1a6fc2" />
<path d="M82 549 Q83 555 89.5 556 Q94 556 96.8 553.5 Q92 555 89 552.5 Q86.5 550 87.5 546.5 Q84 547 82 549 Z" stroke="none" stroke-width="1" fill="#0d5aa8" />
<path d="M117.5 541 H123 L124.5 542.5 H134 V554 H117.5 Z" stroke="none" stroke-width="1" fill="#f5c342" />
<rect x="117.5" y="544" width="16.5" height="10" fill="#ffd865" rx="0" />
<path d="M122 554 V550.5 Q122 549 123.5 549 H128 Q129.5 549 129.5 550.5 V554 H127.5 V551 H124 V554 Z" stroke="none" stroke-width="1" fill="#3c9be8" />
<g transform="translate(162,547) rotate(40)">
<rect x="-7.0" y="-5.7" width="1.4" height="1.6" fill="#e6c21a" rx="0" />
<rect x="-7.0" y="4.1" width="1.4" height="1.6" fill="#e6c21a" rx="0" />
<rect x="-4.5" y="-5.7" width="1.4" height="1.6" fill="#e6c21a" rx="0" />
<rect x="-4.5" y="4.1" width="1.4" height="1.6" fill="#e6c21a" rx="0" />
<rect x="-1.9999999999999998" y="-5.7" width="1.4" height="1.6" fill="#e6c21a" rx="0" />
<rect x="-1.9999999999999998" y="4.1" width="1.4" height="1.6" fill="#e6c21a" rx="0" />
<rect x="0.5000000000000002" y="-5.7" width="1.4" height="1.6" fill="#e6c21a" rx="0" />
<rect x="0.5000000000000002" y="4.1" width="1.4" height="1.6" fill="#e6c21a" rx="0" />
<rect x="3.0" y="-5.7" width="1.4" height="1.6" fill="#e6c21a" rx="0" />
<rect x="3.0" y="4.1" width="1.4" height="1.6" fill="#e6c21a" rx="0" />
<rect x="5.5" y="-5.7" width="1.4" height="1.6" fill="#e6c21a" rx="0" />
<rect x="5.5" y="4.1" width="1.4" height="1.6" fill="#e6c21a" rx="0" />
<rect x="-8" y="-4.3" width="16" height="8.6" fill="#141414" rx="1" stroke="#3a3a3a" stroke-width="0.5"/>
<circle cx="-5.2" cy="-1.5" r="1.1" fill="#555"/>
<rect x="-2" y="-0.8" width="5" height="1.6" fill="#333" rx="0" />
</g>
<g transform="translate(198,547) rotate(40)">
<rect x="-7.0" y="-5.7" width="1.4" height="1.6" fill="#e6c21a" rx="0" />
<rect x="-7.0" y="4.1" width="1.4" height="1.6" fill="#e6c21a" rx="0" />
<rect x="-4.5" y="-5.7" width="1.4" height="1.6" fill="#e6c21a" rx="0" />
<rect x="-4.5" y="4.1" width="1.4" height="1.6" fill="#e6c21a" rx="0" />
<rect x="-1.9999999999999998" y="-5.7" width="1.4" height="1.6" fill="#e6c21a" rx="0" />
<rect x="-1.9999999999999998" y="4.1" width="1.4" height="1.6" fill="#e6c21a" rx="0" />
<rect x="0.5000000000000002" y="-5.7" width="1.4" height="1.6" fill="#e6c21a" rx="0" />
<rect x="0.5000000000000002" y="4.1" width="1.4" height="1.6" fill="#e6c21a" rx="0" />
<rect x="3.0" y="-5.7" width="1.4" height="1.6" fill="#e6c21a" rx="0" />
<rect x="3.0" y="4.1" width="1.4" height="1.6" fill="#e6c21a" rx="0" />
<rect x="5.5" y="-5.7" width="1.4" height="1.6" fill="#e6c21a" rx="0" />
<rect x="5.5" y="4.1" width="1.4" height="1.6" fill="#e6c21a" rx="0" />
<rect x="-8" y="-4.3" width="16" height="8.6" fill="#141414" rx="1" stroke="#3a3a3a" stroke-width="0.5"/>
<circle cx="-5.2" cy="-1.5" r="1.1" fill="#555"/>
<rect x="-2" y="-0.8" width="5" height="1.6" fill="#333" rx="0" />
</g>
<rect x="225.5" y="539.5" width="16" height="15" fill="#001e36" rx="0" stroke="#31a8ff" stroke-width="1"/>
<text x="228" y="550.6" font-size="9" fill="#31a8ff" font-family='"Liberation Sans",sans-serif' font-weight="bold" text-anchor="start" textLength="11" lengthAdjust="spacingAndGlyphs" >Ps</text>
<circle cx="680" cy="546" r="5" fill="#f7b928"/>
<path d="M676.5 555.5 Q673.5 555.5 673.8 552.5 Q674.2 549.8 677.3 550 Q678.2 546.5 682 546.8 Q685.5 547.3 686 550.5 Q689.2 550.5 689.5 553 Q689.5 555.5 686.8 555.5 Z" stroke="none" stroke-width="1" fill="#d8ebfa" stroke="#a9cde8" stroke-width="0.5"/>
<text x="697" y="551.8" font-size="11" fill="#f2f2f2" font-family='"Liberation Sans",sans-serif' font-weight="normal" text-anchor="start" textLength="21.5" lengthAdjust="spacingAndGlyphs" >31°C</text>
<text x="725" y="551.8" font-size="11" fill="#f2f2f2" font-family='"Liberation Sans",sans-serif' font-weight="normal" text-anchor="start" textLength="72.5" lengthAdjust="spacingAndGlyphs" >Parc ensolarado</text>
<path d="M809.5 551 L813.8 546.8 L818 551" stroke="#eee" stroke-width="1.1" fill="none" />
<path d="M827 551 Q824.5 551 824.8 548.6 Q825.3 546.5 827.6 546.8 Q828.8 543.6 832 544 Q835 544.5 835.5 547.5 Q838 547.5 838 549.5 Q837.8 551 836 551 Z" stroke="none" stroke-width="1" fill="#e8e8e8" />
<path d="M848 543.5 H855 V550 H848 Z M855 545 L858.5 543.5 V550 L855 548.5" stroke="#ddd" stroke-width="1" fill="none" />
<path d="M850 553 Q851.5 556 853.5 553" stroke="#ddd" stroke-width="0.9" fill="none" />
<rect x="862.5" y="543.5" width="10" height="7" fill="none" rx="0" stroke="#ddd" stroke-width="1"/>
<rect x="864" y="545" width="6" height="4" fill="#ddd" rx="0" />
<path d="M881 551 Q885 545.5 890.5 545 M883 551.3 Q886 547.6 890.5 547.3 M885 551.5 Q887.3 549.5 890.5 549.5" stroke="#e6e6e6" stroke-width="1" fill="none" />
<path d="M896.5 546.5 H899 L902 543.5 V553.5 L899 550.5 H896.5 Z M904 546 Q905.5 548.5 904 551 M906 544.5 Q908.5 548.5 906 552.5" stroke="#e6e6e6" stroke-width="0.9" fill="none" />
<text x="832.5" y="549.8" font-size="17.5" fill="#1a5fa6" font-family='"Liberation Sans",sans-serif' font-weight="bold" text-anchor="start" textLength="117" lengthAdjust="spacingAndGlyphs" >ELETRÔNICA</text>
<text x="945" y="546" font-size="10" fill="#f5f5f5" font-family='"Liberation Sans",sans-serif' font-weight="normal" text-anchor="end" textLength="20" lengthAdjust="spacingAndGlyphs" opacity="0.9">17:54</text>
<text x="914" y="558.5" font-size="10.5" fill="#f5f5f5" font-family='"Liberation Sans",sans-serif' font-weight="normal" text-anchor="start" textLength="40.5" lengthAdjust="spacingAndGlyphs" >23/11/202</text>
<g>
<clipPath id="chip"><rect x="954" y="529" width="28.5" height="26"/></clipPath>
<g clip-path="url(#chip)">
<rect x="954" y="529" width="28.5" height="26" fill="#2e9e4a" rx="0" />
<circle cx="984" cy="544" r="17" fill="#e9bd1f"/>
<circle cx="986" cy="543" r="15.5" fill="#3b44a6"/>
</g>
<rect x="954" y="529" width="28.5" height="26" fill="none" rx="0" stroke="#6a8fcf" stroke-width="0.6" stroke-dasharray="1 1"/>
<text x="968.5" y="548.5" font-size="15" fill="#d6d6d6" font-family='"Liberation Sans",sans-serif' font-weight="bold" text-anchor="middle" textLength="24" lengthAdjust="spacingAndGlyphs" >BR</text>
<path d="M956 527 V523 M959 527 V521 M962 527 V522 M965 527 V521 M968 527 V523 M971 527 V521 M974 527 V522 M977 527 V523" stroke="#4a6fb8" stroke-width="0.6" fill="none" stroke-dasharray="1 0.8"/>
<path d="M982 520.5 V527.5 L983.8 525.8 L985.2 528.6 L986 528.2 L984.7 525.4 L987 525.3 Z" stroke="none" stroke-width="1" fill="#111" />
<circle cx="980" cy="551" r="5" fill="none" stroke="#777" stroke-width="0.7"/>
</g>
<line x1="995.5" y1="533" x2="995.5" y2="562" stroke="#555" stroke-width="0.6" />
</svg>
</body></html>
